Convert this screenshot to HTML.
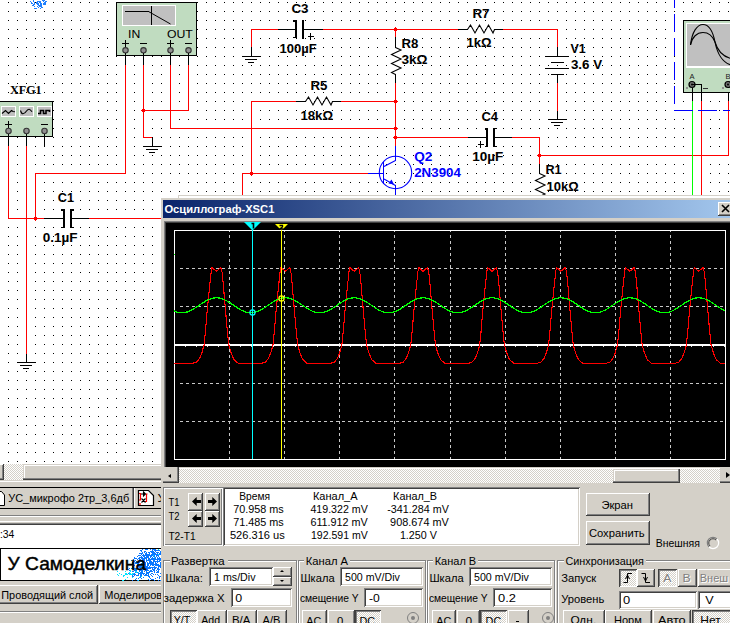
<!DOCTYPE html><html><head><meta charset="utf-8"><style>
*{margin:0;padding:0;box-sizing:border-box}
html,body{width:730px;height:623px;overflow:hidden;background:#fff}
body{position:relative;font-family:"Liberation Sans",sans-serif}
.a{position:absolute}
</style></head><body>
<svg class="a" style="left:0;top:0" width="730" height="623" viewBox="0 0 730 623" shape-rendering="crispEdges">
<defs><pattern id="gd" x="0" y="0" width="9" height="9" patternUnits="userSpaceOnUse"><rect x="8" y="2" width="1" height="1" fill="#000"/></pattern></defs>
<rect x="0" y="0" width="730" height="464" fill="#fff"/>
<rect x="0" y="0" width="730" height="464" fill="url(#gd)"/>
<g fill="#1e7fff">
<rect x="33" y="0" width="1" height="1"/>
<rect x="42" y="0" width="1" height="1"/>
<rect x="43" y="0" width="1" height="1"/>
<rect x="44" y="0" width="1" height="1"/>
<rect x="30" y="1" width="1" height="1"/>
<rect x="33" y="1" width="1" height="1"/>
<rect x="37" y="1" width="1" height="1"/>
<rect x="38" y="1" width="1" height="1"/>
<rect x="39" y="1" width="1" height="1"/>
<rect x="40" y="1" width="1" height="1"/>
<rect x="43" y="1" width="1" height="1"/>
<rect x="45" y="1" width="1" height="1"/>
<rect x="46" y="1" width="1" height="1"/>
<rect x="31" y="2" width="1" height="1"/>
<rect x="34" y="2" width="1" height="1"/>
<rect x="36" y="2" width="1" height="1"/>
<rect x="37" y="2" width="1" height="1"/>
<rect x="39" y="2" width="1" height="1"/>
<rect x="40" y="2" width="1" height="1"/>
<rect x="44" y="2" width="1" height="1"/>
<rect x="45" y="2" width="1" height="1"/>
<rect x="31" y="3" width="1" height="1"/>
<rect x="32" y="3" width="1" height="1"/>
<rect x="34" y="3" width="1" height="1"/>
<rect x="36" y="3" width="1" height="1"/>
<rect x="37" y="3" width="1" height="1"/>
<rect x="38" y="3" width="1" height="1"/>
<rect x="40" y="3" width="1" height="1"/>
<rect x="41" y="3" width="1" height="1"/>
<rect x="43" y="3" width="1" height="1"/>
<rect x="44" y="3" width="1" height="1"/>
<rect x="45" y="3" width="1" height="1"/>
<rect x="33" y="4" width="1" height="1"/>
<rect x="34" y="4" width="1" height="1"/>
<rect x="37" y="4" width="1" height="1"/>
<rect x="38" y="4" width="1" height="1"/>
<rect x="40" y="4" width="1" height="1"/>
<rect x="41" y="4" width="1" height="1"/>
<rect x="43" y="4" width="1" height="1"/>
<rect x="44" y="4" width="1" height="1"/>
<rect x="45" y="4" width="1" height="1"/>
<rect x="32" y="5" width="1" height="1"/>
<rect x="33" y="5" width="1" height="1"/>
<rect x="38" y="5" width="1" height="1"/>
<rect x="39" y="5" width="1" height="1"/>
<rect x="40" y="5" width="1" height="1"/>
<rect x="41" y="5" width="1" height="1"/>
<rect x="34" y="6" width="1" height="1"/>
<rect x="37" y="6" width="1" height="1"/>
<rect x="39" y="6" width="1" height="1"/>
<rect x="40" y="6" width="1" height="1"/>
<rect x="41" y="6" width="1" height="1"/>
<rect x="38" y="7" width="1" height="1"/>
<rect x="41" y="7" width="1" height="1"/>
<rect x="42" y="7" width="1" height="1"/>
<rect x="34" y="8" width="1" height="1"/>
<rect x="35" y="8" width="1" height="1"/>
<rect x="36" y="8" width="1" height="1"/>
<rect x="40" y="8" width="1" height="1"/>
</g>
<rect x="116.5" y="2.5" width="80" height="53" fill="#c0dcc0" stroke="#000" shape-rendering="auto"/>
<rect x="122" y="5" width="54" height="21" fill="#fff"/>
<rect x="123" y="6" width="52" height="19" fill="#c0c0c0"/>
<rect x="125" y="11" width="24" height="1" fill="#000000"/>
<rect x="151" y="6" width="1" height="19" fill="#000000"/>
<path d="M148.5,11.5 L170.5,24" stroke="#000" fill="none" shape-rendering="auto"/>
<text x="128.0" y="38" font-family="Liberation Sans" font-size="11.5" font-weight="normal" fill="#000000" textLength="12.2" lengthAdjust="spacingAndGlyphs">IN</text>
<text x="166.9" y="38" font-family="Liberation Sans" font-size="11.5" font-weight="normal" fill="#000000" textLength="25.9" lengthAdjust="spacingAndGlyphs">OUT</text>
<rect x="122" y="43" width="7" height="1" fill="#000000"/>
<rect x="125" y="40" width="1" height="7" fill="#000000"/>
<rect x="167" y="43" width="7" height="1" fill="#000000"/>
<rect x="170" y="40" width="1" height="7" fill="#000000"/>
<rect x="140" y="43" width="7" height="1" fill="#000000"/>
<rect x="185" y="43" width="7" height="1" fill="#000000"/>
<circle cx="125.5" cy="50.3" r="2.7" fill="#909090" stroke="#333" stroke-width="1.1" shape-rendering="auto"/>
<rect x="125" y="53" width="1" height="12" fill="#000000"/>
<circle cx="143.5" cy="50.3" r="2.7" fill="#909090" stroke="#333" stroke-width="1.1" shape-rendering="auto"/>
<rect x="143" y="53" width="1" height="12" fill="#000000"/>
<circle cx="170.5" cy="50.3" r="2.7" fill="#909090" stroke="#333" stroke-width="1.1" shape-rendering="auto"/>
<rect x="170" y="53" width="1" height="12" fill="#000000"/>
<circle cx="188.5" cy="50.3" r="2.7" fill="#909090" stroke="#333" stroke-width="1.1" shape-rendering="auto"/>
<rect x="188" y="53" width="1" height="12" fill="#000000"/>
<text x="10.0" y="94" font-family="Liberation Serif" font-size="12.2" font-weight="bold" fill="#000000" textLength="31.6" lengthAdjust="spacingAndGlyphs">XFG1</text>
<rect x="-1.5" y="101.5" width="54" height="35" fill="#c0dcc0" stroke="#000" shape-rendering="auto"/>
<rect x="1" y="106" width="15" height="11" fill="#fff"/><rect x="2" y="107" width="13" height="9" fill="#c0c0c0"/>
<rect x="19" y="106" width="15" height="11" fill="#fff"/><rect x="20" y="107" width="13" height="9" fill="#c0c0c0"/>
<rect x="37" y="106" width="15" height="11" fill="#fff"/><rect x="38" y="107" width="13" height="9" fill="#c0c0c0"/>
<path d="M2,113.5 L5.5,110.5 L8.5,113.5 L11.5,110.5 L13,111.5 L15,111.8" fill="none" stroke="#000" stroke-width="1.1" shape-rendering="auto"/>
<path d="M20.5,110.5 Q21.5,114 23,113.7 Q25,113.5 26.5,111 Q28,109 29.2,109.2 Q30.5,109.5 32,111.8" fill="none" stroke="#000" stroke-width="1.1" shape-rendering="auto"/>
<path d="M38,113.5 H40.5 V110.5 H43.5 V113.5 H46 V110.5 H49.5 V112" fill="none" stroke="#000" stroke-width="1.6" shape-rendering="auto"/>
<rect x="5" y="124" width="7" height="1" fill="#000000"/>
<rect x="8" y="121" width="1" height="7" fill="#000000"/>
<rect x="41" y="124" width="7" height="1" fill="#000000"/>
<circle cx="8.5" cy="131" r="2.7" fill="#909090" stroke="#333" stroke-width="1.1" shape-rendering="auto"/>
<rect x="8" y="134" width="1" height="13" fill="#000000"/>
<circle cx="26.5" cy="131" r="2.7" fill="#909090" stroke="#333" stroke-width="1.1" shape-rendering="auto"/>
<rect x="26" y="134" width="1" height="13" fill="#000000"/>
<circle cx="44.5" cy="131" r="2.7" fill="#909090" stroke="#333" stroke-width="1.1" shape-rendering="auto"/>
<rect x="44" y="134" width="1" height="13" fill="#000000"/>
<rect x="8" y="146" width="1" height="73" fill="#ff0000"/>
<rect x="8" y="218" width="37" height="1" fill="#ff0000"/>
<rect x="26" y="146" width="1" height="209" fill="#ff0000"/>
<rect x="26" y="354" width="1" height="8" fill="#000000"/>
<rect x="17" y="362" width="19" height="1" fill="#000000"/>
<rect x="20" y="365" width="12" height="1" fill="#000000"/>
<rect x="23" y="368" width="6" height="1" fill="#000000"/>
<rect x="35" y="173" width="1" height="46" fill="#ff0000"/>
<rect x="34" y="217" width="3" height="3" fill="#ff0000"/><rect x="33" y="218" width="5" height="1" fill="#ff0000"/><rect x="35" y="216" width="1" height="5" fill="#ff0000"/>
<rect x="35" y="173" width="91" height="1" fill="#ff0000"/>
<rect x="125" y="65" width="1" height="109" fill="#ff0000"/>
<rect x="44" y="218" width="20" height="1" fill="#000000"/>
<rect x="63" y="209" width="2" height="19" fill="#000"/><rect x="61" y="209" width="3" height="1.5" fill="#000"/><rect x="61" y="226.5" width="3" height="1.5" fill="#000"/>
<rect x="70" y="209" width="2" height="19" fill="#000"/><rect x="71" y="209" width="3" height="1.5" fill="#000"/><rect x="71" y="226.5" width="3" height="1.5" fill="#000"/>
<rect x="71" y="218" width="19" height="1" fill="#000000"/>
<rect x="89" y="218" width="77" height="1" fill="#ff0000"/>
<text x="57.8" y="202" font-family="Liberation Sans" font-size="12" font-weight="bold" fill="#000000" textLength="16.2" lengthAdjust="spacingAndGlyphs">C1</text>
<text x="42.7" y="242" font-family="Liberation Sans" font-size="12" font-weight="bold" fill="#000000" textLength="34.9" lengthAdjust="spacingAndGlyphs">0.1µF</text>
<rect x="143" y="65" width="1" height="73" fill="#ff0000"/>
<rect x="143" y="137" width="10" height="1" fill="#ff0000"/>
<rect x="152" y="137" width="1" height="10" fill="#000000"/>
<rect x="143" y="146" width="19" height="1" fill="#000000"/>
<rect x="146" y="149" width="12" height="1" fill="#000000"/>
<rect x="149" y="152" width="6" height="1" fill="#000000"/>
<rect x="142" y="109" width="3" height="3" fill="#ff0000"/><rect x="141" y="110" width="5" height="1" fill="#ff0000"/><rect x="143" y="108" width="1" height="5" fill="#ff0000"/>
<rect x="143" y="110" width="46" height="1" fill="#ff0000"/>
<rect x="188" y="65" width="1" height="46" fill="#ff0000"/>
<rect x="170" y="65" width="1" height="64" fill="#ff0000"/>
<rect x="170" y="128" width="226" height="1" fill="#ff0000"/>
<rect x="251" y="29" width="1" height="19" fill="#ff0000"/>
<rect x="251" y="47" width="1" height="10" fill="#000000"/>
<rect x="242" y="56" width="19" height="1" fill="#000000"/>
<rect x="245" y="59" width="12" height="1" fill="#000000"/>
<rect x="248" y="62" width="6" height="1" fill="#000000"/>
<rect x="251" y="29" width="28" height="1" fill="#ff0000"/>
<rect x="278" y="29" width="17" height="1" fill="#000000"/>
<rect x="295" y="20" width="2" height="18" fill="#000"/><rect x="293" y="20" width="3" height="1.5" fill="#000"/><rect x="293" y="36.5" width="3" height="1.5" fill="#000"/>
<rect x="302" y="20" width="2" height="19" fill="#000"/>
<rect x="303" y="29" width="21" height="1" fill="#000000"/>
<rect x="323" y="29" width="136" height="1" fill="#ff0000"/>
<rect x="394" y="28" width="3" height="3" fill="#ff0000"/><rect x="393" y="29" width="5" height="1" fill="#ff0000"/><rect x="395" y="27" width="1" height="5" fill="#ff0000"/>
<text x="291.4" y="13" font-family="Liberation Sans" font-size="12" font-weight="bold" fill="#000000" textLength="17.2" lengthAdjust="spacingAndGlyphs">C3</text>
<text x="279.4" y="53" font-family="Liberation Sans" font-size="12" font-weight="bold" fill="#000000" textLength="37.2" lengthAdjust="spacingAndGlyphs">100µF</text>
<rect x="308" y="36" width="6" height="1" fill="#000000"/>
<rect x="310" y="33" width="1" height="7" fill="#000000"/>
<rect x="458" y="29" width="10" height="1" fill="#000000"/>
<path d="M467.5,29.5 L470.5,25.0 L475.0,33.0 L479.5,25.0 L484.0,33.0 L488.5,25.0 L493.0,33.0 L494.5,29.5" fill="none" stroke="#000" stroke-width="1.1" shape-rendering="auto"/>
<rect x="494" y="29" width="10" height="1" fill="#000000"/>
<rect x="503" y="29" width="55" height="1" fill="#ff0000"/>
<rect x="557" y="29" width="1" height="19" fill="#ff0000"/>
<rect x="557" y="47" width="1" height="10" fill="#000000"/>
<text x="472.4" y="18" font-family="Liberation Sans" font-size="12" font-weight="bold" fill="#000000" textLength="17.2" lengthAdjust="spacingAndGlyphs">R7</text>
<text x="466.4" y="47" font-family="Liberation Sans" font-size="12" font-weight="bold" fill="#000000" textLength="25.2" lengthAdjust="spacingAndGlyphs">1kΩ</text>
<rect x="545" y="56" width="24" height="1" fill="#000000"/>
<rect x="551" y="62" width="13" height="1" fill="#000000"/>
<rect x="545" y="68" width="24" height="1" fill="#000000"/>
<rect x="551" y="74" width="13" height="1" fill="#000000"/>
<rect x="557" y="74" width="1" height="10" fill="#000000"/>
<rect x="557" y="83" width="1" height="29" fill="#ff0000"/>
<rect x="557" y="111" width="1" height="9" fill="#000000"/>
<rect x="548" y="119" width="19" height="1" fill="#000000"/>
<rect x="551" y="122" width="12" height="1" fill="#000000"/>
<rect x="554" y="125" width="6" height="1" fill="#000000"/>
<text x="570.4" y="53" font-family="Liberation Sans" font-size="12" font-weight="bold" fill="#000000" textLength="15.2" lengthAdjust="spacingAndGlyphs">V1</text>
<text x="570.9" y="69" font-family="Liberation Sans" font-size="12" font-weight="bold" fill="#000000" textLength="31.2" lengthAdjust="spacingAndGlyphs">3.6 V</text>
<rect x="395" y="29" width="1" height="9" fill="#ff0000"/>
<rect x="395" y="37" width="1" height="11" fill="#000000"/>
<path d="M395.5,47.5 L401.0,50.0 L391.5,54.5 L401.0,59.0 L391.5,63.5 L401.0,68.0 L391.5,72.5 L395.5,74.5" fill="none" stroke="#000" stroke-width="1.1" shape-rendering="auto"/>
<rect x="395" y="74" width="1" height="10" fill="#000000"/>
<rect x="395" y="83" width="1" height="64" fill="#ff0000"/>
<text x="401.4" y="48" font-family="Liberation Sans" font-size="12" font-weight="bold" fill="#000000" textLength="16.9" lengthAdjust="spacingAndGlyphs">R8</text>
<text x="401.4" y="64" font-family="Liberation Sans" font-size="12" font-weight="bold" fill="#000000" textLength="26.2" lengthAdjust="spacingAndGlyphs">3kΩ</text>
<rect x="394" y="100" width="3" height="3" fill="#ff0000"/><rect x="393" y="101" width="5" height="1" fill="#ff0000"/><rect x="395" y="99" width="1" height="5" fill="#ff0000"/>
<rect x="394" y="127" width="3" height="3" fill="#ff0000"/><rect x="393" y="128" width="5" height="1" fill="#ff0000"/><rect x="395" y="126" width="1" height="5" fill="#ff0000"/>
<rect x="394" y="136" width="3" height="3" fill="#ff0000"/><rect x="393" y="137" width="5" height="1" fill="#ff0000"/><rect x="395" y="135" width="1" height="5" fill="#ff0000"/>
<rect x="251" y="101" width="46" height="1" fill="#ff0000"/>
<rect x="296" y="101" width="10" height="1" fill="#000000"/>
<path d="M305.5,101.5 L308.5,97.0 L313.0,105.0 L317.5,97.0 L322.0,105.0 L326.5,97.0 L331.0,105.0 L332.5,101.5" fill="none" stroke="#000" stroke-width="1.1" shape-rendering="auto"/>
<rect x="332" y="101" width="10" height="1" fill="#000000"/>
<rect x="341" y="101" width="55" height="1" fill="#ff0000"/>
<rect x="251" y="101" width="1" height="73" fill="#ff0000"/>
<rect x="250" y="172" width="3" height="3" fill="#ff0000"/><rect x="249" y="173" width="5" height="1" fill="#ff0000"/><rect x="251" y="171" width="1" height="5" fill="#ff0000"/>
<text x="310.4" y="90" font-family="Liberation Sans" font-size="12" font-weight="bold" fill="#000000" textLength="17.0" lengthAdjust="spacingAndGlyphs">R5</text>
<text x="300.4" y="119.5" font-family="Liberation Sans" font-size="12" font-weight="bold" fill="#000000" textLength="32.7" lengthAdjust="spacingAndGlyphs">18kΩ</text>
<rect x="242" y="173" width="10" height="1" fill="#ff0000"/>
<rect x="242" y="173" width="1" height="25" fill="#ff0000"/>
<rect x="251" y="173" width="118" height="1" fill="#ff0000"/>
<circle cx="395.5" cy="172.5" r="16.2" fill="none" stroke="#0000ff" stroke-width="1.1" shape-rendering="auto"/>
<rect x="368" y="173" width="16" height="1" fill="#0000ff"/>
<rect x="383" y="162" width="1" height="22" fill="#0000ff"/>
<path d="M384,166.5 L395.5,160.5 M384,179 L395.5,185.5" stroke="#0000ff" stroke-width="1.1" fill="none" shape-rendering="auto"/>
<path d="M394,184.5 L388.5,183.5 L391.5,179.5 Z" fill="#0000ff" shape-rendering="auto"/>
<rect x="395" y="146" width="1" height="15" fill="#0000ff"/>
<rect x="395" y="185" width="1" height="13" fill="#0000ff"/>
<text x="414.2" y="161" font-family="Liberation Sans" font-size="12.5" font-weight="bold" fill="#0000ff" textLength="18.1" lengthAdjust="spacingAndGlyphs">Q2</text>
<text x="414.2" y="177" font-family="Liberation Sans" font-size="12.5" font-weight="bold" fill="#0000ff" textLength="46.7" lengthAdjust="spacingAndGlyphs">2N3904</text>
<rect x="395" y="137" width="74" height="1" fill="#ff0000"/>
<rect x="468" y="137" width="19" height="1" fill="#000000"/>
<rect x="486" y="128" width="2" height="19" fill="#000"/><rect x="485" y="128" width="2" height="1.5" fill="#000"/><rect x="485" y="145.5" width="2" height="1.5" fill="#000"/>
<rect x="493" y="128" width="2" height="19" fill="#000"/><rect x="494" y="127.5" width="3" height="1.5" fill="#000"/><rect x="494" y="145.5" width="3" height="1.5" fill="#000"/>
<rect x="494" y="137" width="19" height="1" fill="#000000"/>
<rect x="512" y="137" width="28" height="1" fill="#ff0000"/>
<rect x="539" y="137" width="1" height="19" fill="#ff0000"/>
<rect x="538" y="154" width="3" height="3" fill="#ff0000"/><rect x="537" y="155" width="5" height="1" fill="#ff0000"/><rect x="539" y="153" width="1" height="5" fill="#ff0000"/>
<text x="481.4" y="121" font-family="Liberation Sans" font-size="12" font-weight="bold" fill="#000000" textLength="16.7" lengthAdjust="spacingAndGlyphs">C4</text>
<text x="472.2" y="161" font-family="Liberation Sans" font-size="12" font-weight="bold" fill="#000000" textLength="31.1" lengthAdjust="spacingAndGlyphs">10µF</text>
<rect x="478" y="144" width="6" height="1" fill="#000000"/>
<rect x="480" y="141" width="1" height="7" fill="#000000"/>
<rect x="539" y="155" width="190" height="1" fill="#ff0000"/>
<rect x="728" y="101" width="1" height="55" fill="#ff0000"/>
<rect x="728" y="88" width="1" height="13" fill="#000000"/>
<rect x="539" y="155" width="1" height="10" fill="#ff0000"/>
<rect x="539" y="164" width="1" height="10" fill="#000000"/>
<path d="M539.5,173.5 L545.0,176.0 L535.5,180.5 L545.0,185.0 L535.5,189.5 L545.0,194.0 L535.5,198.5 L539.5,200.5" fill="none" stroke="#000" stroke-width="1.1" shape-rendering="auto"/>
<text x="545.4" y="174" font-family="Liberation Sans" font-size="12" font-weight="bold" fill="#000000" textLength="16.2" lengthAdjust="spacingAndGlyphs">R1</text>
<text x="546.4" y="190.5" font-family="Liberation Sans" font-size="12" font-weight="bold" fill="#000000" textLength="32.2" lengthAdjust="spacingAndGlyphs">10kΩ</text>
<rect x="683.5" y="20.5" width="60" height="72" fill="#c0dcc0" stroke="#000" shape-rendering="auto"/>
<rect x="686" y="23" width="50" height="45" fill="#fff"/><rect x="687" y="24" width="50" height="42" fill="#c0c0c0"/>
<path d="M690.5,45 C692,32 697,24.5 703,24.5 C709,24.5 713,32 715,42 C717,52 721,62 731,65" fill="none" stroke="#000" stroke-width="1.1" shape-rendering="auto"/>
<path d="M690.5,45 C692,37 697,32.5 703,32.5 C709,32.5 713,37 715,42 C717,49 721,56 731,58.5" fill="none" stroke="#000" stroke-width="1.1" shape-rendering="auto"/>
<text x="692" y="79" font-family="Liberation Sans" font-size="7.5" font-weight="normal" fill="#202020" text-anchor="middle" >A</text>
<text x="728" y="79" font-family="Liberation Sans" font-size="7.5" font-weight="normal" fill="#202020" text-anchor="middle" >B</text>
<rect x="703" y="88" width="5" height="1" fill="#303030"/>
<rect x="686" y="87" width="2" height="2" fill="#909090"/><rect x="722" y="87" width="2" height="2" fill="#909090"/>
<circle cx="692" cy="84.5" r="3" fill="#707070" stroke="#000" stroke-width="1.2" shape-rendering="auto"/>
<circle cx="692" cy="84.5" r="1" fill="#000" shape-rendering="auto"/>
<circle cx="728" cy="84.5" r="3" fill="#707070" stroke="#000" stroke-width="1.2" shape-rendering="auto"/>
<circle cx="728" cy="84.5" r="1" fill="#000" shape-rendering="auto"/>
<rect x="692" y="84" width="10" height="1" fill="#000000"/>
<rect x="701" y="84" width="1" height="9" fill="#000000"/>
<rect x="692" y="88" width="1" height="13" fill="#000000"/>
<rect x="692" y="101" width="1" height="97" fill="#00ff00"/>
<rect x="701" y="92" width="1" height="9" fill="#000000"/>
<rect x="701" y="101" width="1" height="97" fill="#ff0000"/>
<rect x="674" y="0" width="1" height="8" fill="#0000ff"/>
<rect x="674" y="14" width="1" height="18" fill="#0000ff"/>
<rect x="674" y="38" width="1" height="18" fill="#0000ff"/>
<rect x="674" y="62" width="1" height="18" fill="#0000ff"/>
<rect x="674" y="86" width="1" height="18" fill="#0000ff"/>
<rect x="674" y="110" width="19" height="1" fill="#0000ff"/>
<rect x="698" y="110" width="19" height="1" fill="#0000ff"/>
<rect x="723" y="110" width="8" height="1" fill="#0000ff"/>
</svg><div class="a" style="left:0px;top:464px;width:161px;height:159px;background:#d4d0c8"></div>
<div class="a" style="left:0px;top:464px;width:161px;height:16px;background-image:repeating-conic-gradient(#fff 0 25%, #d4d0c8 0 50%);background-size:2px 2px"></div>
<div class="a" style="left:-12px;top:464px;width:16px;height:16px;box-shadow:inset -1px -1px #404040, inset 1px 1px #fff, inset -2px -2px #808080;background:#d4d0c8"></div>
<div class="a" style="left:23px;top:464px;width:150px;height:16px;box-shadow:inset -1px -1px #404040, inset -2px -2px #808080, inset 1px 1px #d4d0c8, inset 2px 2px #fff;background:#d4d0c8"></div>
<div class="a" style="left:0px;top:481px;width:161px;height:1px;background:#fff"></div>
<div class="a" style="left:0px;top:487px;width:161px;height:1px;background:#000"></div>
<div class="a" style="left:0px;top:508px;width:161px;height:1px;background:#000"></div>
<div class="a" style="left:-30px;top:488px;width:164px;height:20px;box-shadow:inset -1px 0 #404040, inset -2px 0 #808080, inset 1px 0 #fff"></div>
<svg class="a" style="left:0;top:491px" width="6" height="16"><path d="M-6,0.5 H1.5 L4.5,4 V14.5 H-6" fill="#fff" stroke="#000"/></svg>
<div class="a" style="left:134px;top:488px;width:40px;height:20px;box-shadow:inset 1px 0 #fff"></div>
<svg class="a" style="left:137px;top:489px" width="18" height="18"><path d="M1.5,1.5 H11.5 L16.5,6.5 V16.5 H1.5 Z" fill="#fff" stroke="#000" stroke-width="1.2"/><path d="M2,4.5 H3.5 V11 H2 M10.5,5 H9.5 V12.5 H8 M3,14 V16" fill="none" stroke="#ff0000" stroke-width="1.2"/><path d="M4,5 h4 M6.5,3 l2,2 l-2,2 z M4.5,9.5 l4,4 M8.5,9.5 l-4,4" stroke="#000" fill="none" stroke-width="1.1"/></svg>
<div class="a" style="left:0px;top:515px;width:161px;height:1px;background:#808080"></div>
<div class="a" style="left:0px;top:516px;width:161px;height:1px;background:#fff"></div>
<div class="a" style="left:0px;top:521px;width:161px;height:1px;background:#fff"></div>
<div class="a" style="left:0px;top:523px;width:161px;height:1px;background:#808080"></div>
<div class="a" style="left:0px;top:524px;width:161px;height:1px;background:#404040"></div>
<div class="a" style="left:0px;top:525px;width:161px;height:23px;background:#fff"></div>
<div class="a" style="left:0px;top:548px;width:161px;height:33px;background:#fff;border:1px solid #000;border-right:none"></div>
<svg class="a" style="left:0;top:0" width="165" height="623" shape-rendering="crispEdges"><rect x="142" y="549" width="1" height="1" fill="#0a78ff"/><rect x="145" y="549" width="1" height="1" fill="#0a78ff"/><rect x="146" y="549" width="1" height="1" fill="#0a78ff"/><rect x="147" y="549" width="1" height="1" fill="#0a78ff"/><rect x="150" y="549" width="1" height="1" fill="#0a78ff"/><rect x="152" y="549" width="1" height="1" fill="#0a78ff"/><rect x="153" y="549" width="1" height="1" fill="#0a78ff"/><rect x="154" y="549" width="1" height="1" fill="#0a78ff"/><rect x="155" y="549" width="1" height="1" fill="#0a78ff"/><rect x="158" y="549" width="1" height="1" fill="#00e4ff"/><rect x="161" y="549" width="1" height="1" fill="#0a78ff"/><rect x="162" y="549" width="1" height="1" fill="#0a78ff"/><rect x="140" y="550" width="1" height="1" fill="#0a78ff"/><rect x="141" y="550" width="1" height="1" fill="#0a78ff"/><rect x="152" y="550" width="1" height="1" fill="#0a78ff"/><rect x="154" y="550" width="1" height="1" fill="#0a78ff"/><rect x="155" y="550" width="1" height="1" fill="#0a78ff"/><rect x="156" y="550" width="1" height="1" fill="#0a78ff"/><rect x="157" y="550" width="1" height="1" fill="#0a78ff"/><rect x="158" y="550" width="1" height="1" fill="#0a78ff"/><rect x="159" y="550" width="1" height="1" fill="#0a78ff"/><rect x="161" y="550" width="1" height="1" fill="#0a78ff"/><rect x="141" y="551" width="1" height="1" fill="#0a78ff"/><rect x="144" y="551" width="1" height="1" fill="#0a78ff"/><rect x="145" y="551" width="1" height="1" fill="#0a78ff"/><rect x="150" y="551" width="1" height="1" fill="#0a78ff"/><rect x="151" y="551" width="1" height="1" fill="#0a78ff"/><rect x="152" y="551" width="1" height="1" fill="#0a78ff"/><rect x="153" y="551" width="1" height="1" fill="#0a78ff"/><rect x="155" y="551" width="1" height="1" fill="#0a78ff"/><rect x="160" y="551" width="1" height="1" fill="#0a78ff"/><rect x="142" y="552" width="1" height="1" fill="#0a78ff"/><rect x="144" y="552" width="1" height="1" fill="#0a78ff"/><rect x="146" y="552" width="1" height="1" fill="#0a78ff"/><rect x="148" y="552" width="1" height="1" fill="#0a78ff"/><rect x="149" y="552" width="1" height="1" fill="#0a78ff"/><rect x="151" y="552" width="1" height="1" fill="#0a78ff"/><rect x="152" y="552" width="1" height="1" fill="#0a78ff"/><rect x="153" y="552" width="1" height="1" fill="#0a78ff"/><rect x="154" y="552" width="1" height="1" fill="#0a78ff"/><rect x="156" y="552" width="1" height="1" fill="#0a78ff"/><rect x="157" y="552" width="1" height="1" fill="#0a78ff"/><rect x="158" y="552" width="1" height="1" fill="#0a78ff"/><rect x="160" y="552" width="1" height="1" fill="#0a78ff"/><rect x="161" y="552" width="1" height="1" fill="#0a78ff"/><rect x="162" y="552" width="1" height="1" fill="#0a78ff"/><rect x="139" y="553" width="1" height="1" fill="#0a78ff"/><rect x="140" y="553" width="1" height="1" fill="#0a78ff"/><rect x="141" y="553" width="1" height="1" fill="#0a78ff"/><rect x="142" y="553" width="1" height="1" fill="#0a78ff"/><rect x="145" y="553" width="1" height="1" fill="#0a78ff"/><rect x="146" y="553" width="1" height="1" fill="#0a78ff"/><rect x="149" y="553" width="1" height="1" fill="#0a78ff"/><rect x="152" y="553" width="1" height="1" fill="#0a78ff"/><rect x="153" y="553" width="1" height="1" fill="#0a78ff"/><rect x="154" y="553" width="1" height="1" fill="#0a78ff"/><rect x="155" y="553" width="1" height="1" fill="#0a78ff"/><rect x="157" y="553" width="1" height="1" fill="#0a78ff"/><rect x="159" y="553" width="1" height="1" fill="#0a78ff"/><rect x="160" y="553" width="1" height="1" fill="#0a78ff"/><rect x="161" y="553" width="1" height="1" fill="#0a78ff"/><rect x="141" y="554" width="1" height="1" fill="#0a78ff"/><rect x="143" y="554" width="1" height="1" fill="#0a78ff"/><rect x="145" y="554" width="1" height="1" fill="#0a78ff"/><rect x="146" y="554" width="1" height="1" fill="#0a78ff"/><rect x="147" y="554" width="1" height="1" fill="#0a78ff"/><rect x="148" y="554" width="1" height="1" fill="#0a78ff"/><rect x="149" y="554" width="1" height="1" fill="#0a78ff"/><rect x="151" y="554" width="1" height="1" fill="#0a78ff"/><rect x="152" y="554" width="1" height="1" fill="#0a78ff"/><rect x="153" y="554" width="1" height="1" fill="#0a78ff"/><rect x="154" y="554" width="1" height="1" fill="#0a78ff"/><rect x="155" y="554" width="1" height="1" fill="#0a78ff"/><rect x="156" y="554" width="1" height="1" fill="#0a78ff"/><rect x="157" y="554" width="1" height="1" fill="#0a78ff"/><rect x="158" y="554" width="1" height="1" fill="#00e4ff"/><rect x="159" y="554" width="1" height="1" fill="#0a78ff"/><rect x="160" y="554" width="1" height="1" fill="#0a78ff"/><rect x="161" y="554" width="1" height="1" fill="#0a78ff"/><rect x="138" y="555" width="1" height="1" fill="#0a78ff"/><rect x="139" y="555" width="1" height="1" fill="#0a78ff"/><rect x="140" y="555" width="1" height="1" fill="#0a78ff"/><rect x="142" y="555" width="1" height="1" fill="#0a78ff"/><rect x="143" y="555" width="1" height="1" fill="#0a78ff"/><rect x="144" y="555" width="1" height="1" fill="#0a78ff"/><rect x="145" y="555" width="1" height="1" fill="#0a78ff"/><rect x="146" y="555" width="1" height="1" fill="#0a78ff"/><rect x="147" y="555" width="1" height="1" fill="#0a78ff"/><rect x="148" y="555" width="1" height="1" fill="#0a78ff"/><rect x="149" y="555" width="1" height="1" fill="#0a78ff"/><rect x="150" y="555" width="1" height="1" fill="#0a78ff"/><rect x="151" y="555" width="1" height="1" fill="#0a78ff"/><rect x="152" y="555" width="1" height="1" fill="#0a78ff"/><rect x="153" y="555" width="1" height="1" fill="#00e4ff"/><rect x="154" y="555" width="1" height="1" fill="#0a78ff"/><rect x="156" y="555" width="1" height="1" fill="#0a78ff"/><rect x="157" y="555" width="1" height="1" fill="#0a78ff"/><rect x="158" y="555" width="1" height="1" fill="#0a78ff"/><rect x="162" y="555" width="1" height="1" fill="#0a78ff"/><rect x="137" y="556" width="1" height="1" fill="#0a78ff"/><rect x="141" y="556" width="1" height="1" fill="#0a78ff"/><rect x="143" y="556" width="1" height="1" fill="#0a78ff"/><rect x="144" y="556" width="1" height="1" fill="#0a78ff"/><rect x="146" y="556" width="1" height="1" fill="#0a78ff"/><rect x="147" y="556" width="1" height="1" fill="#0a78ff"/><rect x="148" y="556" width="1" height="1" fill="#0a78ff"/><rect x="150" y="556" width="1" height="1" fill="#0a78ff"/><rect x="151" y="556" width="1" height="1" fill="#0a78ff"/><rect x="153" y="556" width="1" height="1" fill="#0a78ff"/><rect x="154" y="556" width="1" height="1" fill="#0a78ff"/><rect x="156" y="556" width="1" height="1" fill="#0a78ff"/><rect x="158" y="556" width="1" height="1" fill="#0a78ff"/><rect x="134" y="557" width="1" height="1" fill="#0a78ff"/><rect x="139" y="557" width="1" height="1" fill="#0a78ff"/><rect x="140" y="557" width="1" height="1" fill="#0a78ff"/><rect x="141" y="557" width="1" height="1" fill="#0a78ff"/><rect x="142" y="557" width="1" height="1" fill="#0a78ff"/><rect x="144" y="557" width="1" height="1" fill="#0a78ff"/><rect x="145" y="557" width="1" height="1" fill="#0a78ff"/><rect x="146" y="557" width="1" height="1" fill="#0a78ff"/><rect x="147" y="557" width="1" height="1" fill="#0a78ff"/><rect x="148" y="557" width="1" height="1" fill="#0a78ff"/><rect x="150" y="557" width="1" height="1" fill="#0a78ff"/><rect x="152" y="557" width="1" height="1" fill="#0a78ff"/><rect x="154" y="557" width="1" height="1" fill="#00e4ff"/><rect x="155" y="557" width="1" height="1" fill="#0a78ff"/><rect x="157" y="557" width="1" height="1" fill="#0a78ff"/><rect x="159" y="557" width="1" height="1" fill="#0a78ff"/><rect x="161" y="557" width="1" height="1" fill="#0a78ff"/><rect x="134" y="558" width="1" height="1" fill="#0a78ff"/><rect x="135" y="558" width="1" height="1" fill="#0a78ff"/><rect x="136" y="558" width="1" height="1" fill="#0a78ff"/><rect x="138" y="558" width="1" height="1" fill="#0a78ff"/><rect x="139" y="558" width="1" height="1" fill="#0a78ff"/><rect x="141" y="558" width="1" height="1" fill="#0a78ff"/><rect x="142" y="558" width="1" height="1" fill="#0a78ff"/><rect x="143" y="558" width="1" height="1" fill="#0a78ff"/><rect x="144" y="558" width="1" height="1" fill="#0a78ff"/><rect x="145" y="558" width="1" height="1" fill="#0a78ff"/><rect x="146" y="558" width="1" height="1" fill="#0a78ff"/><rect x="148" y="558" width="1" height="1" fill="#0a78ff"/><rect x="149" y="558" width="1" height="1" fill="#0a78ff"/><rect x="151" y="558" width="1" height="1" fill="#0a78ff"/><rect x="152" y="558" width="1" height="1" fill="#0a78ff"/><rect x="153" y="558" width="1" height="1" fill="#0a78ff"/><rect x="154" y="558" width="1" height="1" fill="#0a78ff"/><rect x="155" y="558" width="1" height="1" fill="#0a78ff"/><rect x="157" y="558" width="1" height="1" fill="#0a78ff"/><rect x="158" y="558" width="1" height="1" fill="#0a78ff"/><rect x="159" y="558" width="1" height="1" fill="#0a78ff"/><rect x="160" y="558" width="1" height="1" fill="#0a78ff"/><rect x="161" y="558" width="1" height="1" fill="#0a78ff"/><rect x="162" y="558" width="1" height="1" fill="#0a78ff"/><rect x="133" y="559" width="1" height="1" fill="#0a78ff"/><rect x="137" y="559" width="1" height="1" fill="#0a78ff"/><rect x="139" y="559" width="1" height="1" fill="#0a78ff"/><rect x="140" y="559" width="1" height="1" fill="#0a78ff"/><rect x="142" y="559" width="1" height="1" fill="#0a78ff"/><rect x="143" y="559" width="1" height="1" fill="#0a78ff"/><rect x="144" y="559" width="1" height="1" fill="#0a78ff"/><rect x="146" y="559" width="1" height="1" fill="#0a78ff"/><rect x="148" y="559" width="1" height="1" fill="#0a78ff"/><rect x="149" y="559" width="1" height="1" fill="#0a78ff"/><rect x="150" y="559" width="1" height="1" fill="#0a78ff"/><rect x="151" y="559" width="1" height="1" fill="#0a78ff"/><rect x="152" y="559" width="1" height="1" fill="#0a78ff"/><rect x="153" y="559" width="1" height="1" fill="#0a78ff"/><rect x="154" y="559" width="1" height="1" fill="#0a78ff"/><rect x="155" y="559" width="1" height="1" fill="#0a78ff"/><rect x="156" y="559" width="1" height="1" fill="#0a78ff"/><rect x="157" y="559" width="1" height="1" fill="#0a78ff"/><rect x="158" y="559" width="1" height="1" fill="#0a78ff"/><rect x="159" y="559" width="1" height="1" fill="#0a78ff"/><rect x="160" y="559" width="1" height="1" fill="#0a78ff"/><rect x="161" y="559" width="1" height="1" fill="#0a78ff"/><rect x="131" y="560" width="1" height="1" fill="#0a78ff"/><rect x="135" y="560" width="1" height="1" fill="#0a78ff"/><rect x="139" y="560" width="1" height="1" fill="#0a78ff"/><rect x="141" y="560" width="1" height="1" fill="#0a78ff"/><rect x="142" y="560" width="1" height="1" fill="#0a78ff"/><rect x="143" y="560" width="1" height="1" fill="#0a78ff"/><rect x="144" y="560" width="1" height="1" fill="#0a78ff"/><rect x="146" y="560" width="1" height="1" fill="#0a78ff"/><rect x="147" y="560" width="1" height="1" fill="#0a78ff"/><rect x="148" y="560" width="1" height="1" fill="#0a78ff"/><rect x="149" y="560" width="1" height="1" fill="#0a78ff"/><rect x="150" y="560" width="1" height="1" fill="#0a78ff"/><rect x="153" y="560" width="1" height="1" fill="#0a78ff"/><rect x="154" y="560" width="1" height="1" fill="#0a78ff"/><rect x="157" y="560" width="1" height="1" fill="#0a78ff"/><rect x="159" y="560" width="1" height="1" fill="#0a78ff"/><rect x="160" y="560" width="1" height="1" fill="#0a78ff"/><rect x="161" y="560" width="1" height="1" fill="#00e4ff"/><rect x="134" y="561" width="1" height="1" fill="#0a78ff"/><rect x="136" y="561" width="1" height="1" fill="#0a78ff"/><rect x="138" y="561" width="1" height="1" fill="#0a78ff"/><rect x="139" y="561" width="1" height="1" fill="#0a78ff"/><rect x="140" y="561" width="1" height="1" fill="#0a78ff"/><rect x="141" y="561" width="1" height="1" fill="#0a78ff"/><rect x="142" y="561" width="1" height="1" fill="#0a78ff"/><rect x="144" y="561" width="1" height="1" fill="#0a78ff"/><rect x="146" y="561" width="1" height="1" fill="#0a78ff"/><rect x="149" y="561" width="1" height="1" fill="#0a78ff"/><rect x="150" y="561" width="1" height="1" fill="#0a78ff"/><rect x="151" y="561" width="1" height="1" fill="#0a78ff"/><rect x="153" y="561" width="1" height="1" fill="#0a78ff"/><rect x="154" y="561" width="1" height="1" fill="#0a78ff"/><rect x="155" y="561" width="1" height="1" fill="#0a78ff"/><rect x="156" y="561" width="1" height="1" fill="#0a78ff"/><rect x="157" y="561" width="1" height="1" fill="#0a78ff"/><rect x="158" y="561" width="1" height="1" fill="#0a78ff"/><rect x="159" y="561" width="1" height="1" fill="#0a78ff"/><rect x="161" y="561" width="1" height="1" fill="#0a78ff"/><rect x="162" y="561" width="1" height="1" fill="#0a78ff"/><rect x="132" y="562" width="1" height="1" fill="#0a78ff"/><rect x="133" y="562" width="1" height="1" fill="#0a78ff"/><rect x="135" y="562" width="1" height="1" fill="#0a78ff"/><rect x="136" y="562" width="1" height="1" fill="#0a78ff"/><rect x="137" y="562" width="1" height="1" fill="#0a78ff"/><rect x="138" y="562" width="1" height="1" fill="#0a78ff"/><rect x="139" y="562" width="1" height="1" fill="#0a78ff"/><rect x="142" y="562" width="1" height="1" fill="#0a78ff"/><rect x="143" y="562" width="1" height="1" fill="#0a78ff"/><rect x="144" y="562" width="1" height="1" fill="#0a78ff"/><rect x="145" y="562" width="1" height="1" fill="#0a78ff"/><rect x="147" y="562" width="1" height="1" fill="#0a78ff"/><rect x="149" y="562" width="1" height="1" fill="#0a78ff"/><rect x="150" y="562" width="1" height="1" fill="#0a78ff"/><rect x="151" y="562" width="1" height="1" fill="#0a78ff"/><rect x="152" y="562" width="1" height="1" fill="#0a78ff"/><rect x="153" y="562" width="1" height="1" fill="#0a78ff"/><rect x="155" y="562" width="1" height="1" fill="#0a78ff"/><rect x="157" y="562" width="1" height="1" fill="#0a78ff"/><rect x="160" y="562" width="1" height="1" fill="#0a78ff"/><rect x="161" y="562" width="1" height="1" fill="#0a78ff"/><rect x="162" y="562" width="1" height="1" fill="#0a78ff"/><rect x="132" y="563" width="1" height="1" fill="#0a78ff"/><rect x="133" y="563" width="1" height="1" fill="#0a78ff"/><rect x="135" y="563" width="1" height="1" fill="#0a78ff"/><rect x="136" y="563" width="1" height="1" fill="#0a78ff"/><rect x="137" y="563" width="1" height="1" fill="#0a78ff"/><rect x="138" y="563" width="1" height="1" fill="#0a78ff"/><rect x="141" y="563" width="1" height="1" fill="#0a78ff"/><rect x="142" y="563" width="1" height="1" fill="#0a78ff"/><rect x="143" y="563" width="1" height="1" fill="#0a78ff"/><rect x="145" y="563" width="1" height="1" fill="#0a78ff"/><rect x="147" y="563" width="1" height="1" fill="#0a78ff"/><rect x="148" y="563" width="1" height="1" fill="#0a78ff"/><rect x="149" y="563" width="1" height="1" fill="#0a78ff"/><rect x="150" y="563" width="1" height="1" fill="#0a78ff"/><rect x="151" y="563" width="1" height="1" fill="#0a78ff"/><rect x="152" y="563" width="1" height="1" fill="#0a78ff"/><rect x="153" y="563" width="1" height="1" fill="#0a78ff"/><rect x="155" y="563" width="1" height="1" fill="#0a78ff"/><rect x="156" y="563" width="1" height="1" fill="#0a78ff"/><rect x="160" y="563" width="1" height="1" fill="#0a78ff"/><rect x="161" y="563" width="1" height="1" fill="#0a78ff"/><rect x="162" y="563" width="1" height="1" fill="#0a78ff"/><rect x="128" y="564" width="1" height="1" fill="#0a78ff"/><rect x="137" y="564" width="1" height="1" fill="#0a78ff"/><rect x="138" y="564" width="1" height="1" fill="#0a78ff"/><rect x="140" y="564" width="1" height="1" fill="#0a78ff"/><rect x="142" y="564" width="1" height="1" fill="#0a78ff"/><rect x="143" y="564" width="1" height="1" fill="#0a78ff"/><rect x="144" y="564" width="1" height="1" fill="#0a78ff"/><rect x="145" y="564" width="1" height="1" fill="#0a78ff"/><rect x="147" y="564" width="1" height="1" fill="#0a78ff"/><rect x="148" y="564" width="1" height="1" fill="#0a78ff"/><rect x="150" y="564" width="1" height="1" fill="#0a78ff"/><rect x="151" y="564" width="1" height="1" fill="#0a78ff"/><rect x="152" y="564" width="1" height="1" fill="#0a78ff"/><rect x="153" y="564" width="1" height="1" fill="#0a78ff"/><rect x="154" y="564" width="1" height="1" fill="#0a78ff"/><rect x="155" y="564" width="1" height="1" fill="#0a78ff"/><rect x="156" y="564" width="1" height="1" fill="#0a78ff"/><rect x="157" y="564" width="1" height="1" fill="#0a78ff"/><rect x="158" y="564" width="1" height="1" fill="#0a78ff"/><rect x="160" y="564" width="1" height="1" fill="#0a78ff"/><rect x="161" y="564" width="1" height="1" fill="#0a78ff"/><rect x="134" y="565" width="1" height="1" fill="#0a78ff"/><rect x="137" y="565" width="1" height="1" fill="#0a78ff"/><rect x="138" y="565" width="1" height="1" fill="#0a78ff"/><rect x="139" y="565" width="1" height="1" fill="#0a78ff"/><rect x="140" y="565" width="1" height="1" fill="#0a78ff"/><rect x="141" y="565" width="1" height="1" fill="#0a78ff"/><rect x="142" y="565" width="1" height="1" fill="#0a78ff"/><rect x="143" y="565" width="1" height="1" fill="#0a78ff"/><rect x="145" y="565" width="1" height="1" fill="#0a78ff"/><rect x="147" y="565" width="1" height="1" fill="#0a78ff"/><rect x="148" y="565" width="1" height="1" fill="#0a78ff"/><rect x="150" y="565" width="1" height="1" fill="#0a78ff"/><rect x="152" y="565" width="1" height="1" fill="#0a78ff"/><rect x="153" y="565" width="1" height="1" fill="#0a78ff"/><rect x="155" y="565" width="1" height="1" fill="#0a78ff"/><rect x="156" y="565" width="1" height="1" fill="#0a78ff"/><rect x="157" y="565" width="1" height="1" fill="#0a78ff"/><rect x="158" y="565" width="1" height="1" fill="#0a78ff"/><rect x="159" y="565" width="1" height="1" fill="#0a78ff"/><rect x="160" y="565" width="1" height="1" fill="#0a78ff"/><rect x="161" y="565" width="1" height="1" fill="#0a78ff"/><rect x="132" y="566" width="1" height="1" fill="#0a78ff"/><rect x="138" y="566" width="1" height="1" fill="#0a78ff"/><rect x="139" y="566" width="1" height="1" fill="#0a78ff"/><rect x="140" y="566" width="1" height="1" fill="#0a78ff"/><rect x="141" y="566" width="1" height="1" fill="#0a78ff"/><rect x="142" y="566" width="1" height="1" fill="#0a78ff"/><rect x="143" y="566" width="1" height="1" fill="#0a78ff"/><rect x="145" y="566" width="1" height="1" fill="#0a78ff"/><rect x="146" y="566" width="1" height="1" fill="#0a78ff"/><rect x="147" y="566" width="1" height="1" fill="#0a78ff"/><rect x="149" y="566" width="1" height="1" fill="#0a78ff"/><rect x="154" y="566" width="1" height="1" fill="#0a78ff"/><rect x="158" y="566" width="1" height="1" fill="#0a78ff"/><rect x="159" y="566" width="1" height="1" fill="#0a78ff"/><rect x="160" y="566" width="1" height="1" fill="#0a78ff"/><rect x="161" y="566" width="1" height="1" fill="#0a78ff"/><rect x="132" y="567" width="1" height="1" fill="#0a78ff"/><rect x="133" y="567" width="1" height="1" fill="#0a78ff"/><rect x="137" y="567" width="1" height="1" fill="#0a78ff"/><rect x="139" y="567" width="1" height="1" fill="#0a78ff"/><rect x="140" y="567" width="1" height="1" fill="#0a78ff"/><rect x="141" y="567" width="1" height="1" fill="#0a78ff"/><rect x="142" y="567" width="1" height="1" fill="#0a78ff"/><rect x="144" y="567" width="1" height="1" fill="#0a78ff"/><rect x="145" y="567" width="1" height="1" fill="#0a78ff"/><rect x="146" y="567" width="1" height="1" fill="#0a78ff"/><rect x="147" y="567" width="1" height="1" fill="#0a78ff"/><rect x="148" y="567" width="1" height="1" fill="#0a78ff"/><rect x="149" y="567" width="1" height="1" fill="#0a78ff"/><rect x="150" y="567" width="1" height="1" fill="#0a78ff"/><rect x="151" y="567" width="1" height="1" fill="#0a78ff"/><rect x="152" y="567" width="1" height="1" fill="#0a78ff"/><rect x="153" y="567" width="1" height="1" fill="#0a78ff"/><rect x="154" y="567" width="1" height="1" fill="#0a78ff"/><rect x="155" y="567" width="1" height="1" fill="#0a78ff"/><rect x="156" y="567" width="1" height="1" fill="#0a78ff"/><rect x="158" y="567" width="1" height="1" fill="#0a78ff"/><rect x="160" y="567" width="1" height="1" fill="#0a78ff"/><rect x="162" y="567" width="1" height="1" fill="#0a78ff"/><rect x="129" y="568" width="1" height="1" fill="#0a78ff"/><rect x="131" y="568" width="1" height="1" fill="#0a78ff"/><rect x="132" y="568" width="1" height="1" fill="#0a78ff"/><rect x="134" y="568" width="1" height="1" fill="#0a78ff"/><rect x="135" y="568" width="1" height="1" fill="#0a78ff"/><rect x="136" y="568" width="1" height="1" fill="#0a78ff"/><rect x="140" y="568" width="1" height="1" fill="#0a78ff"/><rect x="142" y="568" width="1" height="1" fill="#0a78ff"/><rect x="143" y="568" width="1" height="1" fill="#0a78ff"/><rect x="144" y="568" width="1" height="1" fill="#0a78ff"/><rect x="145" y="568" width="1" height="1" fill="#0a78ff"/><rect x="146" y="568" width="1" height="1" fill="#0a78ff"/><rect x="147" y="568" width="1" height="1" fill="#0a78ff"/><rect x="148" y="568" width="1" height="1" fill="#0a78ff"/><rect x="149" y="568" width="1" height="1" fill="#0a78ff"/><rect x="150" y="568" width="1" height="1" fill="#0a78ff"/><rect x="152" y="568" width="1" height="1" fill="#0a78ff"/><rect x="154" y="568" width="1" height="1" fill="#0a78ff"/><rect x="155" y="568" width="1" height="1" fill="#0a78ff"/><rect x="157" y="568" width="1" height="1" fill="#0a78ff"/><rect x="158" y="568" width="1" height="1" fill="#0a78ff"/><rect x="161" y="568" width="1" height="1" fill="#0a78ff"/><rect x="128" y="569" width="1" height="1" fill="#0a78ff"/><rect x="133" y="569" width="1" height="1" fill="#0a78ff"/><rect x="134" y="569" width="1" height="1" fill="#00e4ff"/><rect x="135" y="569" width="1" height="1" fill="#0a78ff"/><rect x="136" y="569" width="1" height="1" fill="#0a78ff"/><rect x="138" y="569" width="1" height="1" fill="#0a78ff"/><rect x="140" y="569" width="1" height="1" fill="#0a78ff"/><rect x="141" y="569" width="1" height="1" fill="#0a78ff"/><rect x="142" y="569" width="1" height="1" fill="#0a78ff"/><rect x="143" y="569" width="1" height="1" fill="#0a78ff"/><rect x="144" y="569" width="1" height="1" fill="#0a78ff"/><rect x="145" y="569" width="1" height="1" fill="#0a78ff"/><rect x="146" y="569" width="1" height="1" fill="#0a78ff"/><rect x="147" y="569" width="1" height="1" fill="#0a78ff"/><rect x="152" y="569" width="1" height="1" fill="#0a78ff"/><rect x="153" y="569" width="1" height="1" fill="#0a78ff"/><rect x="154" y="569" width="1" height="1" fill="#0a78ff"/><rect x="157" y="569" width="1" height="1" fill="#0a78ff"/><rect x="158" y="569" width="1" height="1" fill="#0a78ff"/><rect x="159" y="569" width="1" height="1" fill="#0a78ff"/><rect x="161" y="569" width="1" height="1" fill="#0a78ff"/><rect x="129" y="570" width="1" height="1" fill="#0a78ff"/><rect x="130" y="570" width="1" height="1" fill="#00e4ff"/><rect x="134" y="570" width="1" height="1" fill="#0a78ff"/><rect x="135" y="570" width="1" height="1" fill="#0a78ff"/><rect x="136" y="570" width="1" height="1" fill="#0a78ff"/><rect x="139" y="570" width="1" height="1" fill="#0a78ff"/><rect x="140" y="570" width="1" height="1" fill="#0a78ff"/><rect x="141" y="570" width="1" height="1" fill="#0a78ff"/><rect x="142" y="570" width="1" height="1" fill="#0a78ff"/><rect x="145" y="570" width="1" height="1" fill="#0a78ff"/><rect x="146" y="570" width="1" height="1" fill="#0a78ff"/><rect x="147" y="570" width="1" height="1" fill="#0a78ff"/><rect x="148" y="570" width="1" height="1" fill="#0a78ff"/><rect x="150" y="570" width="1" height="1" fill="#0a78ff"/><rect x="151" y="570" width="1" height="1" fill="#0a78ff"/><rect x="153" y="570" width="1" height="1" fill="#0a78ff"/><rect x="154" y="570" width="1" height="1" fill="#0a78ff"/><rect x="156" y="570" width="1" height="1" fill="#0a78ff"/><rect x="158" y="570" width="1" height="1" fill="#0a78ff"/><rect x="117" y="571" width="1" height="1" fill="#00e4ff"/><rect x="125" y="571" width="1" height="1" fill="#00e4ff"/><rect x="130" y="571" width="1" height="1" fill="#00e4ff"/><rect x="132" y="571" width="1" height="1" fill="#0a78ff"/><rect x="133" y="571" width="1" height="1" fill="#0a78ff"/><rect x="135" y="571" width="1" height="1" fill="#00e4ff"/><rect x="136" y="571" width="1" height="1" fill="#00e4ff"/><rect x="139" y="571" width="1" height="1" fill="#0a78ff"/><rect x="141" y="571" width="1" height="1" fill="#0a78ff"/><rect x="142" y="571" width="1" height="1" fill="#0a78ff"/><rect x="144" y="571" width="1" height="1" fill="#0a78ff"/><rect x="146" y="571" width="1" height="1" fill="#0a78ff"/><rect x="149" y="571" width="1" height="1" fill="#0a78ff"/><rect x="150" y="571" width="1" height="1" fill="#0a78ff"/><rect x="151" y="571" width="1" height="1" fill="#0a78ff"/><rect x="152" y="571" width="1" height="1" fill="#0a78ff"/><rect x="154" y="571" width="1" height="1" fill="#0a78ff"/><rect x="157" y="571" width="1" height="1" fill="#0a78ff"/><rect x="158" y="571" width="1" height="1" fill="#0a78ff"/><rect x="129" y="572" width="1" height="1" fill="#00e4ff"/><rect x="135" y="572" width="1" height="1" fill="#0a78ff"/><rect x="136" y="572" width="1" height="1" fill="#00e4ff"/><rect x="137" y="572" width="1" height="1" fill="#0a78ff"/><rect x="138" y="572" width="1" height="1" fill="#00e4ff"/><rect x="140" y="572" width="1" height="1" fill="#0a78ff"/><rect x="141" y="572" width="1" height="1" fill="#0a78ff"/><rect x="142" y="572" width="1" height="1" fill="#0a78ff"/><rect x="146" y="572" width="1" height="1" fill="#0a78ff"/><rect x="147" y="572" width="1" height="1" fill="#0a78ff"/><rect x="148" y="572" width="1" height="1" fill="#0a78ff"/><rect x="149" y="572" width="1" height="1" fill="#0a78ff"/><rect x="154" y="572" width="1" height="1" fill="#0a78ff"/><rect x="156" y="572" width="1" height="1" fill="#0a78ff"/><rect x="157" y="572" width="1" height="1" fill="#0a78ff"/><rect x="158" y="572" width="1" height="1" fill="#0a78ff"/><rect x="161" y="572" width="1" height="1" fill="#0a78ff"/><rect x="119" y="573" width="1" height="1" fill="#00e4ff"/><rect x="125" y="573" width="1" height="1" fill="#00e4ff"/><rect x="126" y="573" width="1" height="1" fill="#00e4ff"/><rect x="128" y="573" width="1" height="1" fill="#0a78ff"/><rect x="129" y="573" width="1" height="1" fill="#00e4ff"/><rect x="130" y="573" width="1" height="1" fill="#00e4ff"/><rect x="132" y="573" width="1" height="1" fill="#00e4ff"/><rect x="133" y="573" width="1" height="1" fill="#00e4ff"/><rect x="134" y="573" width="1" height="1" fill="#0a78ff"/><rect x="138" y="573" width="1" height="1" fill="#0a78ff"/><rect x="139" y="573" width="1" height="1" fill="#0a78ff"/><rect x="140" y="573" width="1" height="1" fill="#0a78ff"/><rect x="141" y="573" width="1" height="1" fill="#0a78ff"/><rect x="142" y="573" width="1" height="1" fill="#0a78ff"/><rect x="143" y="573" width="1" height="1" fill="#0a78ff"/><rect x="144" y="573" width="1" height="1" fill="#0a78ff"/><rect x="146" y="573" width="1" height="1" fill="#0a78ff"/><rect x="147" y="573" width="1" height="1" fill="#0a78ff"/><rect x="148" y="573" width="1" height="1" fill="#0a78ff"/><rect x="151" y="573" width="1" height="1" fill="#0a78ff"/><rect x="152" y="573" width="1" height="1" fill="#0a78ff"/><rect x="160" y="573" width="1" height="1" fill="#0a78ff"/><rect x="162" y="573" width="1" height="1" fill="#0a78ff"/><rect x="117" y="574" width="1" height="1" fill="#00e4ff"/><rect x="121" y="574" width="1" height="1" fill="#00e4ff"/><rect x="125" y="574" width="1" height="1" fill="#00e4ff"/><rect x="126" y="574" width="1" height="1" fill="#00e4ff"/><rect x="127" y="574" width="1" height="1" fill="#00e4ff"/><rect x="129" y="574" width="1" height="1" fill="#00e4ff"/><rect x="130" y="574" width="1" height="1" fill="#00e4ff"/><rect x="131" y="574" width="1" height="1" fill="#00e4ff"/><rect x="132" y="574" width="1" height="1" fill="#00e4ff"/><rect x="133" y="574" width="1" height="1" fill="#0a78ff"/><rect x="134" y="574" width="1" height="1" fill="#0a78ff"/><rect x="135" y="574" width="1" height="1" fill="#0a78ff"/><rect x="138" y="574" width="1" height="1" fill="#0a78ff"/><rect x="140" y="574" width="1" height="1" fill="#0a78ff"/><rect x="141" y="574" width="1" height="1" fill="#0a78ff"/><rect x="143" y="574" width="1" height="1" fill="#0a78ff"/><rect x="145" y="574" width="1" height="1" fill="#0a78ff"/><rect x="146" y="574" width="1" height="1" fill="#0a78ff"/><rect x="148" y="574" width="1" height="1" fill="#0a78ff"/><rect x="150" y="574" width="1" height="1" fill="#0a78ff"/><rect x="153" y="574" width="1" height="1" fill="#0a78ff"/><rect x="155" y="574" width="1" height="1" fill="#0a78ff"/><rect x="157" y="574" width="1" height="1" fill="#0a78ff"/><rect x="162" y="574" width="1" height="1" fill="#0a78ff"/><rect x="118" y="575" width="1" height="1" fill="#00e4ff"/><rect x="123" y="575" width="1" height="1" fill="#00e4ff"/><rect x="124" y="575" width="1" height="1" fill="#00e4ff"/><rect x="132" y="575" width="1" height="1" fill="#0a78ff"/><rect x="134" y="575" width="1" height="1" fill="#0a78ff"/><rect x="136" y="575" width="1" height="1" fill="#0a78ff"/><rect x="137" y="575" width="1" height="1" fill="#0a78ff"/><rect x="138" y="575" width="1" height="1" fill="#0a78ff"/><rect x="140" y="575" width="1" height="1" fill="#0a78ff"/><rect x="141" y="575" width="1" height="1" fill="#0a78ff"/><rect x="144" y="575" width="1" height="1" fill="#0a78ff"/><rect x="145" y="575" width="1" height="1" fill="#0a78ff"/><rect x="146" y="575" width="1" height="1" fill="#0a78ff"/><rect x="147" y="575" width="1" height="1" fill="#0a78ff"/><rect x="148" y="575" width="1" height="1" fill="#0a78ff"/><rect x="151" y="575" width="1" height="1" fill="#0a78ff"/><rect x="158" y="575" width="1" height="1" fill="#0a78ff"/><rect x="123" y="576" width="1" height="1" fill="#00e4ff"/><rect x="132" y="576" width="1" height="1" fill="#0a78ff"/><rect x="133" y="576" width="1" height="1" fill="#0a78ff"/><rect x="140" y="576" width="1" height="1" fill="#0a78ff"/><rect x="141" y="576" width="1" height="1" fill="#00e4ff"/><rect x="148" y="576" width="1" height="1" fill="#0a78ff"/><rect x="149" y="576" width="1" height="1" fill="#0a78ff"/><rect x="152" y="576" width="1" height="1" fill="#0a78ff"/><rect x="159" y="576" width="1" height="1" fill="#0a78ff"/><rect x="160" y="576" width="1" height="1" fill="#0a78ff"/><rect x="127" y="577" width="1" height="1" fill="#00e4ff"/><rect x="132" y="577" width="1" height="1" fill="#00e4ff"/><rect x="139" y="577" width="1" height="1" fill="#00e4ff"/><rect x="140" y="577" width="1" height="1" fill="#0a78ff"/><rect x="143" y="577" width="1" height="1" fill="#0a78ff"/><rect x="149" y="577" width="1" height="1" fill="#0a78ff"/><rect x="157" y="577" width="1" height="1" fill="#0a78ff"/><rect x="159" y="577" width="1" height="1" fill="#0a78ff"/><rect x="161" y="577" width="1" height="1" fill="#0a78ff"/><rect x="136" y="578" width="1" height="1" fill="#0a78ff"/><rect x="138" y="578" width="1" height="1" fill="#0a78ff"/><rect x="141" y="578" width="1" height="1" fill="#0a78ff"/><rect x="150" y="578" width="1" height="1" fill="#0a78ff"/><rect x="155" y="578" width="1" height="1" fill="#0a78ff"/><rect x="159" y="578" width="1" height="1" fill="#0a78ff"/><rect x="125" y="579" width="1" height="1" fill="#00e4ff"/><rect x="135" y="579" width="1" height="1" fill="#0a78ff"/><rect x="148" y="579" width="1" height="1" fill="#0a78ff"/><rect x="151" y="579" width="1" height="1" fill="#0a78ff"/><rect x="152" y="579" width="1" height="1" fill="#0a78ff"/><rect x="153" y="579" width="1" height="1" fill="#0a78ff"/><rect x="161" y="579" width="1" height="1" fill="#0a78ff"/><rect x="122" y="580" width="1" height="1" fill="#00e4ff"/><rect x="123" y="580" width="1" height="1" fill="#00e4ff"/><rect x="132" y="580" width="1" height="1" fill="#0a78ff"/><rect x="137" y="580" width="1" height="1" fill="#0a78ff"/><rect x="138" y="580" width="1" height="1" fill="#00e4ff"/><rect x="149" y="580" width="1" height="1" fill="#0a78ff"/><rect x="154" y="580" width="1" height="1" fill="#0a78ff"/><rect x="158" y="580" width="1" height="1" fill="#0a78ff"/><rect x="160" y="580" width="1" height="1" fill="#0a78ff"/><rect x="161" y="580" width="1" height="1" fill="#0a78ff"/><rect x="162" y="580" width="1" height="1" fill="#0a78ff"/></svg>
<div class="a" style="left:-2px;top:585px;width:100px;height:19px;box-shadow:inset -1px -1px #404040, inset 1px 1px #fff, inset -2px -2px #808080;background:#d4d0c8"></div>
<div class="a" style="left:99px;top:585px;width:70px;height:19px;box-shadow:inset -1px -1px #404040, inset 1px 1px #fff, inset -2px -2px #808080;background:#d4d0c8"></div>
<div class="a" style="left:0px;top:611px;width:161px;height:1px;background:#808080"></div>
<div class="a" style="left:0px;top:612px;width:161px;height:1px;background:#fff"></div>
<svg class="a" style="left:0;top:0" width="730" height="623" viewBox="0 0 730 623">
<text x="8.2" y="502" font-family="Liberation Sans" font-size="11" font-weight="normal" fill="#000" textLength="120.99999999999999" lengthAdjust="spacingAndGlyphs" >УС_микрофо 2тр_3,6дб</text>
<text x="157.4" y="502" font-family="Liberation Sans" font-size="11" font-weight="normal" fill="#000" textLength="8.199999999999989" lengthAdjust="spacingAndGlyphs" >У</text>
<text x="-0.1" y="538" font-family="Liberation Sans" font-size="11" font-weight="normal" fill="#000" textLength="14.4" lengthAdjust="spacingAndGlyphs" >:34</text>
<text x="7.6" y="570" font-family="Liberation Sans" font-size="19" font-weight="normal" fill="#000" textLength="138.5" lengthAdjust="spacingAndGlyphs" stroke="#000" stroke-width="0.45">У Самоделкина</text>
<text x="1.3" y="599" font-family="Liberation Sans" font-size="11" font-weight="normal" fill="#000" textLength="91.8" lengthAdjust="spacingAndGlyphs" >Проводящий слой</text>
<text x="104.2" y="599" font-family="Liberation Sans" font-size="11" font-weight="normal" fill="#000" textLength="57.89999999999999" lengthAdjust="spacingAndGlyphs" >Моделиров</text>
</svg><div class="a" style="left:178px;top:195px;width:560px;height:3px;background:#fff;border-top:1px solid #d4d0c8;border-left:1px solid #d4d0c8"></div>
<div class="a" style="left:161px;top:198px;width:580px;height:430px;background:#d4d0c8;"></div>
<div class="a" style="left:163px;top:200px;width:580px;height:18px;background:linear-gradient(to right,#0a246a,#a6caf0)"></div>
<div class="a" style="left:718px;top:202px;width:16px;height:14px;background:#d4d0c8;box-shadow:inset -1px -1px #404040, inset 1px 1px #fff, inset -2px -2px #808080"></div>
<svg class="a" style="left:718px;top:202px" width="16" height="14"><path d="M4,3 L11,10 M11,3 L4,10" stroke="#000" stroke-width="1.6"/></svg>
<div class="a" style="left:164px;top:221px;width:570px;height:247px;background:#000;box-shadow:inset 1px 1px #808080, inset 2px 2px #404040;"></div>
<svg class="a" style="left:0;top:0" width="730" height="623" viewBox="0 0 730 623">
<g shape-rendering="crispEdges">
<rect x="174.5" y="230.5" width="551" height="229" fill="none" stroke="#fff"/>
<line x1="229.5" y1="235" x2="229.5" y2="459" stroke="#c8c8c8" stroke-dasharray="3 3"/><rect x="229" y="231" width="1" height="1" fill="#c8c8c8"/>
<line x1="284.5" y1="235" x2="284.5" y2="459" stroke="#c8c8c8" stroke-dasharray="3 3"/><rect x="284" y="231" width="1" height="1" fill="#c8c8c8"/>
<line x1="339.5" y1="235" x2="339.5" y2="459" stroke="#c8c8c8" stroke-dasharray="3 3"/><rect x="339" y="231" width="1" height="1" fill="#c8c8c8"/>
<line x1="394.5" y1="235" x2="394.5" y2="459" stroke="#c8c8c8" stroke-dasharray="3 3"/><rect x="394" y="231" width="1" height="1" fill="#c8c8c8"/>
<line x1="450.5" y1="235" x2="450.5" y2="459" stroke="#c8c8c8" stroke-dasharray="3 3"/><rect x="450" y="231" width="1" height="1" fill="#c8c8c8"/>
<line x1="505.5" y1="235" x2="505.5" y2="459" stroke="#c8c8c8" stroke-dasharray="3 3"/><rect x="505" y="231" width="1" height="1" fill="#c8c8c8"/>
<line x1="560.5" y1="235" x2="560.5" y2="459" stroke="#c8c8c8" stroke-dasharray="3 3"/><rect x="560" y="231" width="1" height="1" fill="#c8c8c8"/>
<line x1="615.5" y1="235" x2="615.5" y2="459" stroke="#c8c8c8" stroke-dasharray="3 3"/><rect x="615" y="231" width="1" height="1" fill="#c8c8c8"/>
<line x1="670.5" y1="235" x2="670.5" y2="459" stroke="#c8c8c8" stroke-dasharray="3 3"/><rect x="670" y="231" width="1" height="1" fill="#c8c8c8"/>
<line x1="180" y1="268.5" x2="725" y2="268.5" stroke="#c8c8c8" stroke-dasharray="3 3"/>
<line x1="180" y1="306.5" x2="725" y2="306.5" stroke="#c8c8c8" stroke-dasharray="3 3"/>
<line x1="180" y1="383.5" x2="725" y2="383.5" stroke="#c8c8c8" stroke-dasharray="3 3"/>
<line x1="180" y1="421.5" x2="725" y2="421.5" stroke="#c8c8c8" stroke-dasharray="3 3"/>
<rect x="174" y="344" width="551" height="2" fill="#fff"/>
<rect x="185" y="346" width="1" height="1" fill="#e0e0e0"/>
<rect x="196" y="346" width="1" height="1" fill="#e0e0e0"/>
<rect x="207" y="346" width="1" height="1" fill="#e0e0e0"/>
<rect x="218" y="346" width="1" height="1" fill="#e0e0e0"/>
<rect x="229" y="346" width="1" height="1" fill="#e0e0e0"/>
<rect x="240" y="346" width="1" height="1" fill="#e0e0e0"/>
<rect x="251" y="346" width="1" height="1" fill="#e0e0e0"/>
<rect x="262" y="346" width="1" height="1" fill="#e0e0e0"/>
<rect x="273" y="346" width="1" height="1" fill="#e0e0e0"/>
<rect x="284" y="346" width="1" height="1" fill="#e0e0e0"/>
<rect x="295" y="346" width="1" height="1" fill="#e0e0e0"/>
<rect x="306" y="346" width="1" height="1" fill="#e0e0e0"/>
<rect x="317" y="346" width="1" height="1" fill="#e0e0e0"/>
<rect x="328" y="346" width="1" height="1" fill="#e0e0e0"/>
<rect x="339" y="346" width="1" height="1" fill="#e0e0e0"/>
<rect x="350" y="346" width="1" height="1" fill="#e0e0e0"/>
<rect x="361" y="346" width="1" height="1" fill="#e0e0e0"/>
<rect x="372" y="346" width="1" height="1" fill="#e0e0e0"/>
<rect x="383" y="346" width="1" height="1" fill="#e0e0e0"/>
<rect x="394" y="346" width="1" height="1" fill="#e0e0e0"/>
<rect x="405" y="346" width="1" height="1" fill="#e0e0e0"/>
<rect x="416" y="346" width="1" height="1" fill="#e0e0e0"/>
<rect x="427" y="346" width="1" height="1" fill="#e0e0e0"/>
<rect x="438" y="346" width="1" height="1" fill="#e0e0e0"/>
<rect x="449" y="346" width="1" height="1" fill="#e0e0e0"/>
<rect x="460" y="346" width="1" height="1" fill="#e0e0e0"/>
<rect x="471" y="346" width="1" height="1" fill="#e0e0e0"/>
<rect x="482" y="346" width="1" height="1" fill="#e0e0e0"/>
<rect x="493" y="346" width="1" height="1" fill="#e0e0e0"/>
<rect x="504" y="346" width="1" height="1" fill="#e0e0e0"/>
<rect x="515" y="346" width="1" height="1" fill="#e0e0e0"/>
<rect x="526" y="346" width="1" height="1" fill="#e0e0e0"/>
<rect x="537" y="346" width="1" height="1" fill="#e0e0e0"/>
<rect x="548" y="346" width="1" height="1" fill="#e0e0e0"/>
<rect x="559" y="346" width="1" height="1" fill="#e0e0e0"/>
<rect x="570" y="346" width="1" height="1" fill="#e0e0e0"/>
<rect x="581" y="346" width="1" height="1" fill="#e0e0e0"/>
<rect x="592" y="346" width="1" height="1" fill="#e0e0e0"/>
<rect x="603" y="346" width="1" height="1" fill="#e0e0e0"/>
<rect x="614" y="346" width="1" height="1" fill="#e0e0e0"/>
<rect x="625" y="346" width="1" height="1" fill="#e0e0e0"/>
<rect x="636" y="346" width="1" height="1" fill="#e0e0e0"/>
<rect x="647" y="346" width="1" height="1" fill="#e0e0e0"/>
<rect x="658" y="346" width="1" height="1" fill="#e0e0e0"/>
<rect x="669" y="346" width="1" height="1" fill="#e0e0e0"/>
<rect x="680" y="346" width="1" height="1" fill="#e0e0e0"/>
<rect x="691" y="346" width="1" height="1" fill="#e0e0e0"/>
<rect x="702" y="346" width="1" height="1" fill="#e0e0e0"/>
<rect x="713" y="346" width="1" height="1" fill="#e0e0e0"/>
<rect x="724" y="346" width="1" height="1" fill="#e0e0e0"/>
<rect x="174" y="254" width="1" height="1" fill="#00ff00"/>
</g>
<path d="M174.00,363.50 L192.20,363.50 L196.70,362.00 L199.50,358.50 L201.80,353.00 L204.10,345.00 L205.40,332.00 L206.80,315.00 L208.40,299.00 L210.10,282.00 L211.30,271.00 L212.00,267.50 L216.40,271.30 L220.80,267.50 L222.00,272.00 L223.20,283.00 L224.60,300.00 L226.00,316.00 L227.40,331.50 L228.80,345.00 L231.10,353.00 L233.90,359.60 L238.40,363.50 L261.10,363.50 L265.60,362.00 L268.40,358.50 L270.70,353.00 L273.00,345.00 L274.30,332.00 L275.70,315.00 L277.30,299.00 L279.00,282.00 L280.20,271.00 L280.90,267.50 L285.30,271.30 L289.70,267.50 L290.90,272.00 L292.10,283.00 L293.50,300.00 L294.90,316.00 L296.30,331.50 L297.70,345.00 L300.00,353.00 L302.80,359.60 L307.30,363.50 L330.00,363.50 L334.50,362.00 L337.30,358.50 L339.60,353.00 L341.90,345.00 L343.20,332.00 L344.60,315.00 L346.20,299.00 L347.90,282.00 L349.10,271.00 L349.80,267.50 L354.20,271.30 L358.60,267.50 L359.80,272.00 L361.00,283.00 L362.40,300.00 L363.80,316.00 L365.20,331.50 L366.60,345.00 L368.90,353.00 L371.70,359.60 L376.20,363.50 L398.90,363.50 L403.40,362.00 L406.20,358.50 L408.50,353.00 L410.80,345.00 L412.10,332.00 L413.50,315.00 L415.10,299.00 L416.80,282.00 L418.00,271.00 L418.70,267.50 L423.10,271.30 L427.50,267.50 L428.70,272.00 L429.90,283.00 L431.30,300.00 L432.70,316.00 L434.10,331.50 L435.50,345.00 L437.80,353.00 L440.60,359.60 L445.10,363.50 L467.80,363.50 L472.30,362.00 L475.10,358.50 L477.40,353.00 L479.70,345.00 L481.00,332.00 L482.40,315.00 L484.00,299.00 L485.70,282.00 L486.90,271.00 L487.60,267.50 L492.00,271.30 L496.40,267.50 L497.60,272.00 L498.80,283.00 L500.20,300.00 L501.60,316.00 L503.00,331.50 L504.40,345.00 L506.70,353.00 L509.50,359.60 L514.00,363.50 L536.70,363.50 L541.20,362.00 L544.00,358.50 L546.30,353.00 L548.60,345.00 L549.90,332.00 L551.30,315.00 L552.90,299.00 L554.60,282.00 L555.80,271.00 L556.50,267.50 L560.90,271.30 L565.30,267.50 L566.50,272.00 L567.70,283.00 L569.10,300.00 L570.50,316.00 L571.90,331.50 L573.30,345.00 L575.60,353.00 L578.40,359.60 L582.90,363.50 L605.60,363.50 L610.10,362.00 L612.90,358.50 L615.20,353.00 L617.50,345.00 L618.80,332.00 L620.20,315.00 L621.80,299.00 L623.50,282.00 L624.70,271.00 L625.40,267.50 L629.80,271.30 L634.20,267.50 L635.40,272.00 L636.60,283.00 L638.00,300.00 L639.40,316.00 L640.80,331.50 L642.20,345.00 L644.50,353.00 L647.30,359.60 L651.80,363.50 L674.50,363.50 L679.00,362.00 L681.80,358.50 L684.10,353.00 L686.40,345.00 L687.70,332.00 L689.10,315.00 L690.70,299.00 L692.40,282.00 L693.60,271.00 L694.30,267.50 L698.70,271.30 L703.10,267.50 L704.30,272.00 L705.50,283.00 L706.90,300.00 L708.30,316.00 L709.70,331.50 L711.10,345.00 L713.40,353.00 L716.20,359.60 L720.70,363.50 L725.00,363.50" fill="none" stroke="#ff0000" stroke-width="1.1" stroke-linejoin="round" shape-rendering="crispEdges"/>
<path d="M174.00,310.91 L175.00,311.34 L176.00,311.72 L177.00,312.05 L178.00,312.32 L179.00,312.53 L180.00,312.68 L181.00,312.77 L182.00,312.80 L183.00,312.77 L184.00,312.67 L185.00,312.51 L186.00,312.29 L187.00,312.02 L188.00,311.69 L189.00,311.30 L190.00,310.87 L191.00,310.39 L192.00,309.86 L193.00,309.30 L194.00,308.71 L195.00,308.09 L196.00,307.44 L197.00,306.78 L198.00,306.10 L199.00,305.42 L200.00,304.74 L201.00,304.06 L202.00,303.39 L203.00,302.74 L204.00,302.11 L205.00,301.50 L206.00,300.93 L207.00,300.39 L208.00,299.89 L209.00,299.44 L210.00,299.04 L211.00,298.69 L212.00,298.40 L213.00,298.16 L214.00,297.98 L215.00,297.86 L216.00,297.80 L217.00,297.81 L218.00,297.88 L219.00,298.01 L220.00,298.20 L221.00,298.45 L222.00,298.76 L223.00,299.12 L224.00,299.53 L225.00,299.99 L226.00,300.50 L227.00,301.04 L228.00,301.62 L229.00,302.23 L230.00,302.87 L231.00,303.52 L232.00,304.19 L233.00,304.87 L234.00,305.56 L235.00,306.24 L236.00,306.91 L237.00,307.57 L238.00,308.21 L239.00,308.83 L240.00,309.42 L241.00,309.97 L242.00,310.49 L243.00,310.96 L244.00,311.38 L245.00,311.76 L246.00,312.08 L247.00,312.34 L248.00,312.55 L249.00,312.69 L250.00,312.78 L251.00,312.80 L252.00,312.76 L253.00,312.66 L254.00,312.49 L255.00,312.27 L256.00,311.99 L257.00,311.65 L258.00,311.26 L259.00,310.82 L260.00,310.34 L261.00,309.81 L262.00,309.25 L263.00,308.65 L264.00,308.02 L265.00,307.38 L266.00,306.71 L267.00,306.03 L268.00,305.35 L269.00,304.67 L270.00,303.99 L271.00,303.32 L272.00,302.67 L273.00,302.04 L274.00,301.44 L275.00,300.87 L276.00,300.34 L277.00,299.85 L278.00,299.40 L279.00,299.00 L280.00,298.66 L281.00,298.37 L282.00,298.14 L283.00,297.96 L284.00,297.85 L285.00,297.80 L286.00,297.82 L287.00,297.89 L288.00,298.03 L289.00,298.22 L290.00,298.48 L291.00,298.79 L292.00,299.16 L293.00,299.57 L294.00,300.04 L295.00,300.55 L296.00,301.10 L297.00,301.68 L298.00,302.29 L299.00,302.93 L300.00,303.59 L301.00,304.26 L302.00,304.94 L303.00,305.62 L304.00,306.31 L305.00,306.98 L306.00,307.64 L307.00,308.28 L308.00,308.89 L309.00,309.48 L310.00,310.03 L311.00,310.54 L312.00,311.00 L313.00,311.42 L314.00,311.79 L315.00,312.11 L316.00,312.37 L317.00,312.57 L318.00,312.70 L319.00,312.78 L320.00,312.80 L321.00,312.75 L322.00,312.64 L323.00,312.47 L324.00,312.24 L325.00,311.96 L326.00,311.61 L327.00,311.22 L328.00,310.78 L329.00,310.29 L330.00,309.76 L331.00,309.19 L332.00,308.59 L333.00,307.96 L334.00,307.31 L335.00,306.64 L336.00,305.97 L337.00,305.28 L338.00,304.60 L339.00,303.92 L340.00,303.26 L341.00,302.61 L342.00,301.98 L343.00,301.38 L344.00,300.82 L345.00,300.29 L346.00,299.80 L347.00,299.36 L348.00,298.97 L349.00,298.63 L350.00,298.34 L351.00,298.12 L352.00,297.95 L353.00,297.84 L354.00,297.80 L355.00,297.82 L356.00,297.90 L357.00,298.04 L358.00,298.25 L359.00,298.51 L360.00,298.82 L361.00,299.20 L362.00,299.62 L363.00,300.09 L364.00,300.60 L365.00,301.15 L366.00,301.74 L367.00,302.36 L368.00,303.00 L369.00,303.65 L370.00,304.33 L371.00,305.01 L372.00,305.69 L373.00,306.37 L374.00,307.05 L375.00,307.70 L376.00,308.34 L377.00,308.95 L378.00,309.53 L379.00,310.08 L380.00,310.59 L381.00,311.05 L382.00,311.46 L383.00,311.83 L384.00,312.14 L385.00,312.39 L386.00,312.58 L387.00,312.72 L388.00,312.79 L389.00,312.80 L390.00,312.74 L391.00,312.63 L392.00,312.45 L393.00,312.22 L394.00,311.92 L395.00,311.58 L396.00,311.18 L397.00,310.73 L398.00,310.23 L399.00,309.70 L400.00,309.13 L401.00,308.53 L402.00,307.90 L403.00,307.24 L404.00,306.58 L405.00,305.90 L406.00,305.21 L407.00,304.53 L408.00,303.86 L409.00,303.19 L410.00,302.54 L411.00,301.92 L412.00,301.33 L413.00,300.76 L414.00,300.24 L415.00,299.75 L416.00,299.32 L417.00,298.93 L418.00,298.60 L419.00,298.32 L420.00,298.10 L421.00,297.94 L422.00,297.84 L423.00,297.80 L424.00,297.83 L425.00,297.91 L426.00,298.06 L427.00,298.27 L428.00,298.54 L429.00,298.86 L430.00,299.24 L431.00,299.66 L432.00,300.14 L433.00,300.65 L434.00,301.21 L435.00,301.80 L436.00,302.42 L437.00,303.06 L438.00,303.72 L439.00,304.40 L440.00,305.08 L441.00,305.76 L442.00,306.44 L443.00,307.11 L444.00,307.77 L445.00,308.40 L446.00,309.01 L447.00,309.59 L448.00,310.13 L449.00,310.63 L450.00,311.09 L451.00,311.50 L452.00,311.86 L453.00,312.16 L454.00,312.41 L455.00,312.60 L456.00,312.73 L457.00,312.79 L458.00,312.79 L459.00,312.73 L460.00,312.61 L461.00,312.43 L462.00,312.19 L463.00,311.89 L464.00,311.54 L465.00,311.13 L466.00,310.68 L467.00,310.18 L468.00,309.64 L469.00,309.07 L470.00,308.46 L471.00,307.83 L472.00,307.18 L473.00,306.51 L474.00,305.83 L475.00,305.15 L476.00,304.46 L477.00,303.79 L478.00,303.13 L479.00,302.48 L480.00,301.86 L481.00,301.27 L482.00,300.71 L483.00,300.19 L484.00,299.71 L485.00,299.28 L486.00,298.89 L487.00,298.57 L488.00,298.29 L489.00,298.08 L490.00,297.92 L491.00,297.83 L492.00,297.80 L493.00,297.83 L494.00,297.92 L495.00,298.08 L496.00,298.29 L497.00,298.57 L498.00,298.89 L499.00,299.28 L500.00,299.71 L501.00,300.19 L502.00,300.71 L503.00,301.27 L504.00,301.86 L505.00,302.48 L506.00,303.13 L507.00,303.79 L508.00,304.46 L509.00,305.15 L510.00,305.83 L511.00,306.51 L512.00,307.18 L513.00,307.83 L514.00,308.46 L515.00,309.07 L516.00,309.64 L517.00,310.18 L518.00,310.68 L519.00,311.13 L520.00,311.54 L521.00,311.89 L522.00,312.19 L523.00,312.43 L524.00,312.61 L525.00,312.73 L526.00,312.79 L527.00,312.79 L528.00,312.73 L529.00,312.60 L530.00,312.41 L531.00,312.16 L532.00,311.86 L533.00,311.50 L534.00,311.09 L535.00,310.63 L536.00,310.13 L537.00,309.59 L538.00,309.01 L539.00,308.40 L540.00,307.77 L541.00,307.11 L542.00,306.44 L543.00,305.76 L544.00,305.08 L545.00,304.40 L546.00,303.72 L547.00,303.06 L548.00,302.42 L549.00,301.80 L550.00,301.21 L551.00,300.65 L552.00,300.14 L553.00,299.66 L554.00,299.24 L555.00,298.86 L556.00,298.54 L557.00,298.27 L558.00,298.06 L559.00,297.91 L560.00,297.83 L561.00,297.80 L562.00,297.84 L563.00,297.94 L564.00,298.10 L565.00,298.32 L566.00,298.60 L567.00,298.93 L568.00,299.32 L569.00,299.75 L570.00,300.24 L571.00,300.76 L572.00,301.33 L573.00,301.92 L574.00,302.54 L575.00,303.19 L576.00,303.86 L577.00,304.53 L578.00,305.21 L579.00,305.90 L580.00,306.58 L581.00,307.24 L582.00,307.90 L583.00,308.53 L584.00,309.13 L585.00,309.70 L586.00,310.23 L587.00,310.73 L588.00,311.18 L589.00,311.58 L590.00,311.92 L591.00,312.22 L592.00,312.45 L593.00,312.63 L594.00,312.74 L595.00,312.80 L596.00,312.79 L597.00,312.72 L598.00,312.58 L599.00,312.39 L600.00,312.14 L601.00,311.83 L602.00,311.46 L603.00,311.05 L604.00,310.59 L605.00,310.08 L606.00,309.53 L607.00,308.95 L608.00,308.34 L609.00,307.70 L610.00,307.05 L611.00,306.37 L612.00,305.69 L613.00,305.01 L614.00,304.33 L615.00,303.65 L616.00,303.00 L617.00,302.36 L618.00,301.74 L619.00,301.15 L620.00,300.60 L621.00,300.09 L622.00,299.62 L623.00,299.20 L624.00,298.82 L625.00,298.51 L626.00,298.25 L627.00,298.04 L628.00,297.90 L629.00,297.82 L630.00,297.80 L631.00,297.84 L632.00,297.95 L633.00,298.12 L634.00,298.34 L635.00,298.63 L636.00,298.97 L637.00,299.36 L638.00,299.80 L639.00,300.29 L640.00,300.82 L641.00,301.38 L642.00,301.98 L643.00,302.61 L644.00,303.26 L645.00,303.92 L646.00,304.60 L647.00,305.28 L648.00,305.97 L649.00,306.64 L650.00,307.31 L651.00,307.96 L652.00,308.59 L653.00,309.19 L654.00,309.76 L655.00,310.29 L656.00,310.78 L657.00,311.22 L658.00,311.61 L659.00,311.96 L660.00,312.24 L661.00,312.47 L662.00,312.64 L663.00,312.75 L664.00,312.80 L665.00,312.78 L666.00,312.70 L667.00,312.57 L668.00,312.37 L669.00,312.11 L670.00,311.79 L671.00,311.42 L672.00,311.00 L673.00,310.54 L674.00,310.03 L675.00,309.48 L676.00,308.89 L677.00,308.28 L678.00,307.64 L679.00,306.98 L680.00,306.31 L681.00,305.62 L682.00,304.94 L683.00,304.26 L684.00,303.59 L685.00,302.93 L686.00,302.29 L687.00,301.68 L688.00,301.10 L689.00,300.55 L690.00,300.04 L691.00,299.57 L692.00,299.16 L693.00,298.79 L694.00,298.48 L695.00,298.22 L696.00,298.03 L697.00,297.89 L698.00,297.82 L699.00,297.80 L700.00,297.85 L701.00,297.96 L702.00,298.14 L703.00,298.37 L704.00,298.66 L705.00,299.00 L706.00,299.40 L707.00,299.85 L708.00,300.34 L709.00,300.87 L710.00,301.44 L711.00,302.04 L712.00,302.67 L713.00,303.32 L714.00,303.99 L715.00,304.67 L716.00,305.35 L717.00,306.03 L718.00,306.71 L719.00,307.38 L720.00,308.02 L721.00,308.65 L722.00,309.25 L723.00,309.81 L724.00,310.34 L725.00,310.82" fill="none" stroke="#00ff00" stroke-width="1.25" shape-rendering="crispEdges"/>
<rect x="252" y="230" width="1" height="229" fill="#00ffff" shape-rendering="crispEdges"/>
<rect x="281" y="230" width="1" height="229" fill="#ffff00" shape-rendering="crispEdges"/>
<path d="M244,222 L261,222 L252.5,230.5 Z" fill="#00ffff"/>
<path d="M275,224 L288,224 L281.5,230.5 Z" fill="#ffff00"/>
<path d="M251.5,223.5 h2 v5" stroke="#000" stroke-width="1.6" fill="none"/>
<path d="M279.5,225.5 h3 v1.5 l-3,2 h4" stroke="#000" stroke-width="1.3" fill="none"/>
<circle cx="252.5" cy="312.5" r="2.6" fill="none" stroke="#00ffff" stroke-width="1.2"/>
<circle cx="281.5" cy="298.5" r="2.6" fill="none" stroke="#ffff00" stroke-width="1.2"/>
</svg>
<div class="a" style="left:164px;top:467px;width:570px;height:1px;background:#d4d0c8"></div>
<div class="a" style="left:179px;top:468px;width:560px;height:1px;background:#fff"></div>
<div class="a" style="left:179px;top:469px;width:560px;height:14px;background-image:repeating-conic-gradient(#fff 0 25%, #d4d0c8 0 50%);background-size:2px 2px"></div>
<div class="a" style="left:163px;top:467px;width:16px;height:16px;box-shadow:inset -1px -1px #404040, inset -2px -2px #808080, inset 1px 1px #d4d0c8;background:#d4d0c8"><div class="a" style="left:5px;top:7px;width:0;height:0;border-right:3px solid #000;border-top:2.5px solid transparent;border-bottom:2.5px solid transparent"></div></div>
<div class="a" style="left:613px;top:469px;width:67px;height:14px;box-shadow:inset -1px -1px #404040, inset -2px -2px #808080, inset 1px 1px #d4d0c8, inset 2px 2px #fff;background:#d4d0c8"></div>
<div class="a" style="left:720px;top:467px;width:16px;height:16px;box-shadow:inset -1px -1px #404040, inset -2px -2px #808080, inset 1px 1px #d4d0c8;background:#d4d0c8"><div class="a" style="left:6px;top:5px;width:0;height:0;border-left:4px solid #000;border-top:3.5px solid transparent;border-bottom:3.5px solid transparent"></div></div>
<div class="a" style="left:163px;top:487px;width:60px;height:59px;box-shadow:inset 1px 1px #808080, inset -1px -1px #fff, inset 2px 2px #fff, inset -2px -2px #808080"></div>
<div class="a" style="left:188px;top:493px;width:15px;height:18px;box-shadow:inset -1px -1px #404040, inset 1px 1px #fff, inset -2px -2px #808080;background:#d4d0c8"><svg class="a" style="left:0;top:0" width="15" height="18"><path d="M4,8.5 L8.7,4.0 V7.0 H13 V10.0 H8.7 V13.0 Z" fill="#000"/></svg></div>
<div class="a" style="left:205px;top:493px;width:15px;height:18px;box-shadow:inset -1px -1px #404040, inset 1px 1px #fff, inset -2px -2px #808080;background:#d4d0c8"><svg class="a" style="left:0;top:0" width="15" height="18"><path d="M12,8.5 L7.3,4.0 V7.0 H3 V10.0 H7.3 V13.0 Z" fill="#000"/></svg></div>
<div class="a" style="left:188px;top:511px;width:15px;height:16px;box-shadow:inset -1px -1px #404040, inset 1px 1px #fff, inset -2px -2px #808080;background:#d4d0c8"><svg class="a" style="left:0;top:0" width="15" height="16"><path d="M4,7.5 L8.7,3.0 V6.0 H13 V9.0 H8.7 V12.0 Z" fill="#000"/></svg></div>
<div class="a" style="left:205px;top:511px;width:15px;height:16px;box-shadow:inset -1px -1px #404040, inset 1px 1px #fff, inset -2px -2px #808080;background:#d4d0c8"><svg class="a" style="left:0;top:0" width="15" height="16"><path d="M12,7.5 L7.3,3.0 V6.0 H3 V9.0 H7.3 V12.0 Z" fill="#000"/></svg></div>
<div class="a" style="left:223px;top:487px;width:357px;height:59px;box-shadow:inset 1px 1px #808080, inset -1px -1px #fff, inset 2px 2px #404040, inset -2px -2px #d4d0c8;background:#fff"></div>
<div class="a" style="left:586px;top:493px;width:64px;height:23px;box-shadow:inset -1px -1px #404040, inset 1px 1px #fff, inset -2px -2px #808080;background:#d4d0c8"></div>
<div class="a" style="left:586px;top:521px;width:64px;height:24px;box-shadow:inset -1px -1px #404040, inset 1px 1px #fff, inset -2px -2px #808080;background:#d4d0c8"></div>
<svg class="a" style="left:706px;top:536px" width="14" height="14"><path d="M3,11 A5.5,5.5 0 0 1 11,3" stroke="#808080" stroke-width="1.2" fill="none"/><path d="M4,10 A4.2,4.2 0 0 1 10,4" stroke="#404040" fill="none"/><path d="M11,3 A5.5,5.5 0 0 1 3,11" stroke="#fff" stroke-width="1.2" fill="none"/></svg>
<div class="a" style="left:163px;top:560px;width:134px;height:70px;border:1px solid #808080;box-shadow:inset 1px 1px #fff, 1px 1px #fff"></div>
<div class="a" style="left:170px;top:559px;width:58px;height:3px;background:#d4d0c8"></div>
<div class="a" style="left:298px;top:560px;width:128px;height:70px;border:1px solid #808080;box-shadow:inset 1px 1px #fff, 1px 1px #fff"></div>
<div class="a" style="left:304px;top:559px;width:46px;height:3px;background:#d4d0c8"></div>
<div class="a" style="left:427px;top:560px;width:128px;height:70px;border:1px solid #808080;box-shadow:inset 1px 1px #fff, 1px 1px #fff"></div>
<div class="a" style="left:433px;top:559px;width:45px;height:3px;background:#d4d0c8"></div>
<div class="a" style="left:557px;top:560px;width:180px;height:70px;border:1px solid #808080;box-shadow:inset 1px 1px #fff, 1px 1px #fff"></div>
<div class="a" style="left:564px;top:559px;width:82px;height:3px;background:#d4d0c8"></div>
<div class="a" style="left:209px;top:567px;width:64px;height:19px;box-shadow:inset 1px 1px #808080, inset -1px -1px #fff, inset 2px 2px #404040, inset -2px -2px #d4d0c8;background:#fff"></div>
<div class="a" style="left:273px;top:567px;width:19px;height:10px;box-shadow:inset -1px -1px #404040, inset 1px 1px #fff, inset -2px -2px #808080;background:#d4d0c8"><div class="a" style="left:7px;top:3px;width:0;height:0;border-bottom:2px solid #000;border-left:2px solid transparent;border-right:2px solid transparent"></div></div>
<div class="a" style="left:273px;top:577px;width:19px;height:9px;box-shadow:inset -1px -1px #404040, inset 1px 1px #fff, inset -2px -2px #808080;background:#d4d0c8"><div class="a" style="left:7px;top:3px;width:0;height:0;border-top:2px solid #000;border-left:2px solid transparent;border-right:2px solid transparent"></div></div>
<div class="a" style="left:231px;top:588px;width:61px;height:19px;box-shadow:inset 1px 1px #808080, inset -1px -1px #fff, inset 2px 2px #404040, inset -2px -2px #d4d0c8;background:#fff"></div>
<div class="a" style="left:170px;top:610px;width:27px;height:20px;box-shadow:inset 1px 1px #404040, inset -1px -1px #fff, inset 2px 2px #808080;background-image:repeating-conic-gradient(#fff 0 25%, #d4d0c8 0 50%);background-size:2px 2px"></div>
<div class="a" style="left:197px;top:610px;width:30px;height:20px;box-shadow:inset -1px -1px #404040, inset 1px 1px #fff, inset -2px -2px #808080;background:#d4d0c8"></div>
<div class="a" style="left:227px;top:610px;width:30px;height:20px;box-shadow:inset -1px -1px #404040, inset 1px 1px #fff, inset -2px -2px #808080;background:#d4d0c8"></div>
<div class="a" style="left:257px;top:610px;width:30px;height:20px;box-shadow:inset -1px -1px #404040, inset 1px 1px #fff, inset -2px -2px #808080;background:#d4d0c8"></div>
<div class="a" style="left:340px;top:567px;width:83px;height:19px;box-shadow:inset 1px 1px #808080, inset -1px -1px #fff, inset 2px 2px #404040, inset -2px -2px #d4d0c8;background:#fff"></div>
<div class="a" style="left:364px;top:588px;width:59px;height:19px;box-shadow:inset 1px 1px #808080, inset -1px -1px #fff, inset 2px 2px #404040, inset -2px -2px #d4d0c8;background:#fff"></div>
<div class="a" style="left:469px;top:567px;width:83px;height:19px;box-shadow:inset 1px 1px #808080, inset -1px -1px #fff, inset 2px 2px #404040, inset -2px -2px #d4d0c8;background:#fff"></div>
<div class="a" style="left:493px;top:588px;width:59px;height:19px;box-shadow:inset 1px 1px #808080, inset -1px -1px #fff, inset 2px 2px #404040, inset -2px -2px #d4d0c8;background:#fff"></div>
<div class="a" style="left:302px;top:610px;width:25px;height:20px;box-shadow:inset -1px -1px #404040, inset 1px 1px #fff, inset -2px -2px #808080;background:#d4d0c8"></div>
<div class="a" style="left:328px;top:610px;width:27px;height:20px;box-shadow:inset -1px -1px #404040, inset 1px 1px #fff, inset -2px -2px #808080;background:#d4d0c8"></div>
<div class="a" style="left:355px;top:610px;width:26px;height:20px;box-shadow:inset 1px 1px #404040, inset -1px -1px #fff, inset 2px 2px #808080;background-image:repeating-conic-gradient(#fff 0 25%, #d4d0c8 0 50%);background-size:2px 2px"></div>
<div class="a" style="left:432px;top:610px;width:24px;height:20px;box-shadow:inset -1px -1px #404040, inset 1px 1px #fff, inset -2px -2px #808080;background:#d4d0c8"></div>
<div class="a" style="left:457px;top:610px;width:23px;height:20px;box-shadow:inset -1px -1px #404040, inset 1px 1px #fff, inset -2px -2px #808080;background:#d4d0c8"></div>
<div class="a" style="left:480px;top:610px;width:27px;height:20px;box-shadow:inset 1px 1px #404040, inset -1px -1px #fff, inset 2px 2px #808080;background-image:repeating-conic-gradient(#fff 0 25%, #d4d0c8 0 50%);background-size:2px 2px"></div>
<div class="a" style="left:508px;top:610px;width:21px;height:20px;box-shadow:inset -1px -1px #404040, inset 1px 1px #fff, inset -2px -2px #808080;background:#d4d0c8"></div>
<div class="a" style="left:516px;top:621px;width:3px;height:1px;background:#000"></div>
<svg class="a" style="left:406px;top:611px" width="14" height="14"><circle cx="7" cy="7" r="5.5" fill="none" stroke="#808080"/><circle cx="7" cy="7" r="2" fill="#808080"/></svg>
<svg class="a" style="left:541px;top:611px" width="14" height="14"><circle cx="7" cy="7" r="5.5" fill="none" stroke="#808080"/><circle cx="7" cy="7" r="2" fill="#808080"/></svg>
<div class="a" style="left:619px;top:569px;width:18px;height:18px;box-shadow:inset 1px 1px #404040, inset -1px -1px #fff, inset 2px 2px #808080;background-image:repeating-conic-gradient(#fff 0 25%, #d4d0c8 0 50%);background-size:2px 2px"><svg width="18" height="18"><path d="M4.5,13.5 H8.5 V4.5 H13 M6.5,10 L8.5,6 L10.5,10" stroke="#000" fill="none"/></svg></div>
<div class="a" style="left:637px;top:569px;width:18px;height:18px;box-shadow:inset -1px -1px #404040, inset 1px 1px #fff, inset -2px -2px #808080;background:#d4d0c8"><svg width="18" height="18"><path d="M4.5,4.5 H8.5 V13.5 H13 M6.5,8 L8.5,12 L10.5,8" stroke="#000" fill="none"/></svg></div>
<div class="a" style="left:658px;top:569px;width:19px;height:18px;box-shadow:inset 1px 1px #404040, inset -1px -1px #fff, inset 2px 2px #808080;background-image:repeating-conic-gradient(#fff 0 25%, #d4d0c8 0 50%);background-size:2px 2px"></div>
<div class="a" style="left:678px;top:569px;width:19px;height:18px;box-shadow:inset -1px -1px #404040, inset 1px 1px #fff, inset -2px -2px #808080;background:#d4d0c8"></div>
<div class="a" style="left:698px;top:569px;width:40px;height:18px;box-shadow:inset -1px -1px #404040, inset 1px 1px #fff, inset -2px -2px #808080;background:#d4d0c8"></div>
<div class="a" style="left:619px;top:591px;width:78px;height:18px;box-shadow:inset 1px 1px #808080, inset -1px -1px #fff, inset 2px 2px #404040, inset -2px -2px #d4d0c8;background:#fff"></div>
<div class="a" style="left:698px;top:591px;width:40px;height:18px;box-shadow:inset 1px 1px #808080, inset -1px -1px #fff, inset 2px 2px #404040, inset -2px -2px #d4d0c8;background:#fff"></div>
<div class="a" style="left:563px;top:610px;width:42px;height:20px;box-shadow:inset -1px -1px #404040, inset 1px 1px #fff, inset -2px -2px #808080;background:#d4d0c8"></div>
<div class="a" style="left:605px;top:610px;width:47px;height:20px;box-shadow:inset -1px -1px #404040, inset 1px 1px #fff, inset -2px -2px #808080;background:#d4d0c8"></div>
<div class="a" style="left:653px;top:610px;width:38px;height:20px;box-shadow:inset -1px -1px #404040, inset 1px 1px #fff, inset -2px -2px #808080;background:#d4d0c8"></div>
<div class="a" style="left:692px;top:610px;width:45px;height:20px;box-shadow:inset 1px 1px #404040, inset -1px -1px #fff, inset 2px 2px #808080;background-image:repeating-conic-gradient(#fff 0 25%, #d4d0c8 0 50%);background-size:2px 2px"></div>
<svg class="a" style="left:0;top:0" width="730" height="623" viewBox="0 0 730 623">
<text x="164.4" y="213" font-family="Liberation Sans" font-size="11" font-weight="bold" fill="#fff" textLength="109.99999999999997" lengthAdjust="spacingAndGlyphs" >Осциллограф-XSC1</text>
<text x="168.4" y="506" font-family="Liberation Sans" font-size="11" font-weight="normal" fill="#000" textLength="11.0" lengthAdjust="spacingAndGlyphs" >T1</text>
<text x="168.4" y="520" font-family="Liberation Sans" font-size="11" font-weight="normal" fill="#000" textLength="11.0" lengthAdjust="spacingAndGlyphs" >T2</text>
<text x="168.4" y="540" font-family="Liberation Sans" font-size="11" font-weight="normal" fill="#000" textLength="27.19999999999999" lengthAdjust="spacingAndGlyphs" >T2-T1</text>
<text x="239.2" y="500" font-family="Liberation Sans" font-size="10.5" font-weight="normal" fill="#000" textLength="30.80000000000001" lengthAdjust="spacingAndGlyphs" >Время</text>
<text x="312.9" y="500" font-family="Liberation Sans" font-size="10.5" font-weight="normal" fill="#000" textLength="44.700000000000045" lengthAdjust="spacingAndGlyphs" >Канал_А</text>
<text x="393.1" y="500" font-family="Liberation Sans" font-size="10.5" font-weight="normal" fill="#000" textLength="43.89999999999998" lengthAdjust="spacingAndGlyphs" >Канал_В</text>
<text x="233.2" y="513" font-family="Liberation Sans" font-size="10.5" font-weight="normal" fill="#000" textLength="50.5" lengthAdjust="spacingAndGlyphs" >70.958 ms</text>
<text x="310.4" y="513" font-family="Liberation Sans" font-size="10.5" font-weight="normal" fill="#000" textLength="57.400000000000034" lengthAdjust="spacingAndGlyphs" >419.322 mV</text>
<text x="387.3" y="513" font-family="Liberation Sans" font-size="10.5" font-weight="normal" fill="#000" textLength="61.5" lengthAdjust="spacingAndGlyphs" >-341.284 mV</text>
<text x="233.2" y="526" font-family="Liberation Sans" font-size="10.5" font-weight="normal" fill="#000" textLength="50.5" lengthAdjust="spacingAndGlyphs" >71.485 ms</text>
<text x="310.4" y="526" font-family="Liberation Sans" font-size="10.5" font-weight="normal" fill="#000" textLength="57.400000000000034" lengthAdjust="spacingAndGlyphs" >611.912 mV</text>
<text x="390.1" y="526" font-family="Liberation Sans" font-size="10.5" font-weight="normal" fill="#000" textLength="58.69999999999999" lengthAdjust="spacingAndGlyphs" >908.674 mV</text>
<text x="229.9" y="539" font-family="Liberation Sans" font-size="10.5" font-weight="normal" fill="#000" textLength="54.900000000000006" lengthAdjust="spacingAndGlyphs" >526.316 us</text>
<text x="311.0" y="539" font-family="Liberation Sans" font-size="10.5" font-weight="normal" fill="#000" textLength="56.80000000000001" lengthAdjust="spacingAndGlyphs" >192.591 mV</text>
<text x="399.9" y="539" font-family="Liberation Sans" font-size="10.5" font-weight="normal" fill="#000" textLength="37.10000000000002" lengthAdjust="spacingAndGlyphs" >1.250 V</text>
<text x="601.4" y="508.5" font-family="Liberation Sans" font-size="11" font-weight="normal" fill="#000" textLength="31.600000000000023" lengthAdjust="spacingAndGlyphs" >Экран</text>
<text x="588.9" y="536.5" font-family="Liberation Sans" font-size="11" font-weight="normal" fill="#000" textLength="55.80000000000007" lengthAdjust="spacingAndGlyphs" >Сохранить</text>
<text x="655.7" y="546.5" font-family="Liberation Sans" font-size="11" font-weight="normal" fill="#000" textLength="44.19999999999993" lengthAdjust="spacingAndGlyphs" >Внешняя</text>
<text x="170.9" y="565" font-family="Liberation Sans" font-size="11" font-weight="normal" fill="#000" textLength="53.79999999999998" lengthAdjust="spacingAndGlyphs" >Развертка</text>
<text x="305.7" y="565" font-family="Liberation Sans" font-size="11" font-weight="normal" fill="#000" textLength="42.400000000000034" lengthAdjust="spacingAndGlyphs" >Канал А</text>
<text x="434.7" y="565" font-family="Liberation Sans" font-size="11" font-weight="normal" fill="#000" textLength="41.5" lengthAdjust="spacingAndGlyphs" >Канал В</text>
<text x="565.4" y="565" font-family="Liberation Sans" font-size="11" font-weight="normal" fill="#000" textLength="78.39999999999998" lengthAdjust="spacingAndGlyphs" >Синхронизация</text>
<text x="165.4" y="582" font-family="Liberation Sans" font-size="11" font-weight="normal" fill="#000" textLength="37.400000000000006" lengthAdjust="spacingAndGlyphs" >Шкала:</text>
<text x="214.1" y="581" font-family="Liberation Sans" font-size="11" font-weight="normal" fill="#000" textLength="41.400000000000006" lengthAdjust="spacingAndGlyphs" >1 ms/Div</text>
<text x="163.8" y="602" font-family="Liberation Sans" font-size="11" font-weight="normal" fill="#000" textLength="60.89999999999998" lengthAdjust="spacingAndGlyphs" >задержка X</text>
<text x="235.2" y="602" font-family="Liberation Sans" font-size="11" font-weight="normal" fill="#000" textLength="6.900000000000006" lengthAdjust="spacingAndGlyphs" >0</text>
<text x="173.8" y="624" font-family="Liberation Sans" font-size="11" font-weight="normal" fill="#000" textLength="16.5" lengthAdjust="spacingAndGlyphs" >Y/T</text>
<text x="201.2" y="624" font-family="Liberation Sans" font-size="11" font-weight="normal" fill="#000" textLength="18.900000000000006" lengthAdjust="spacingAndGlyphs" >Add</text>
<text x="231.9" y="624" font-family="Liberation Sans" font-size="11" font-weight="normal" fill="#000" textLength="18.5" lengthAdjust="spacingAndGlyphs" >B/A</text>
<text x="262.6" y="624" font-family="Liberation Sans" font-size="11" font-weight="normal" fill="#000" textLength="17.899999999999977" lengthAdjust="spacingAndGlyphs" >A/B</text>
<text x="300.4" y="582" font-family="Liberation Sans" font-size="11" font-weight="normal" fill="#000" textLength="34.200000000000045" lengthAdjust="spacingAndGlyphs" >Шкала</text>
<text x="345.0" y="581" font-family="Liberation Sans" font-size="11" font-weight="normal" fill="#000" textLength="54.89999999999998" lengthAdjust="spacingAndGlyphs" >500 mV/Div</text>
<text x="299.9" y="602" font-family="Liberation Sans" font-size="11" font-weight="normal" fill="#000" textLength="58.700000000000045" lengthAdjust="spacingAndGlyphs" >смещение Y</text>
<text x="369.0" y="602" font-family="Liberation Sans" font-size="11" font-weight="normal" fill="#000" textLength="10.800000000000011" lengthAdjust="spacingAndGlyphs" >-0</text>
<text x="429.4" y="582" font-family="Liberation Sans" font-size="11" font-weight="normal" fill="#000" textLength="34.200000000000045" lengthAdjust="spacingAndGlyphs" >Шкала</text>
<text x="474.0" y="581" font-family="Liberation Sans" font-size="11" font-weight="normal" fill="#000" textLength="54.89999999999998" lengthAdjust="spacingAndGlyphs" >500 mV/Div</text>
<text x="428.9" y="602" font-family="Liberation Sans" font-size="11" font-weight="normal" fill="#000" textLength="58.700000000000045" lengthAdjust="spacingAndGlyphs" >смещение Y</text>
<text x="498.0" y="602" font-family="Liberation Sans" font-size="11" font-weight="normal" fill="#000" textLength="17.899999999999977" lengthAdjust="spacingAndGlyphs" >0.2</text>
<text x="306.3" y="625" font-family="Liberation Sans" font-size="11" font-weight="normal" fill="#000" textLength="15.0" lengthAdjust="spacingAndGlyphs" >AC</text>
<text x="337.0" y="625" font-family="Liberation Sans" font-size="11" font-weight="normal" fill="#000" textLength="6.300000000000011" lengthAdjust="spacingAndGlyphs" >0</text>
<text x="359.4" y="625" font-family="Liberation Sans" font-size="11" font-weight="normal" fill="#000" textLength="15.600000000000023" lengthAdjust="spacingAndGlyphs" >DC</text>
<text x="436.3" y="625" font-family="Liberation Sans" font-size="11" font-weight="normal" fill="#000" textLength="15.0" lengthAdjust="spacingAndGlyphs" >AC</text>
<text x="465.4" y="625" font-family="Liberation Sans" font-size="11" font-weight="normal" fill="#000" textLength="6.600000000000023" lengthAdjust="spacingAndGlyphs" >0</text>
<text x="485.6" y="625" font-family="Liberation Sans" font-size="11" font-weight="normal" fill="#000" textLength="15.599999999999966" lengthAdjust="spacingAndGlyphs" >DC</text>
<text x="561.2" y="582" font-family="Liberation Sans" font-size="11" font-weight="normal" fill="#000" textLength="35.0" lengthAdjust="spacingAndGlyphs" >Запуск</text>
<text x="663.3" y="582" font-family="Liberation Sans" font-size="11" font-weight="normal" fill="#808080" textLength="8.100000000000023" lengthAdjust="spacingAndGlyphs" style="text-shadow:1px 1px #fff">A</text>
<text x="682.4" y="582" font-family="Liberation Sans" font-size="11" font-weight="normal" fill="#808080" textLength="8.200000000000045" lengthAdjust="spacingAndGlyphs" style="text-shadow:1px 1px #fff">B</text>
<text x="699.8" y="582" font-family="Liberation Sans" font-size="11" font-weight="normal" fill="#808080" textLength="28.300000000000068" lengthAdjust="spacingAndGlyphs" style="text-shadow:1px 1px #fff">Внеш</text>
<text x="561.2" y="602.5" font-family="Liberation Sans" font-size="11" font-weight="normal" fill="#000" textLength="43.09999999999991" lengthAdjust="spacingAndGlyphs" >Уровень</text>
<text x="622.9" y="604" font-family="Liberation Sans" font-size="11" font-weight="normal" fill="#000" textLength="7.2000000000000455" lengthAdjust="spacingAndGlyphs" >0</text>
<text x="705.2" y="604" font-family="Liberation Sans" font-size="11" font-weight="normal" fill="#000" textLength="8.399999999999977" lengthAdjust="spacingAndGlyphs" >V</text>
<text x="570.4" y="624" font-family="Liberation Sans" font-size="11" font-weight="normal" fill="#000" textLength="25.800000000000068" lengthAdjust="spacingAndGlyphs" >Одн.</text>
<text x="614.0" y="624" font-family="Liberation Sans" font-size="11" font-weight="normal" fill="#000" textLength="27.799999999999955" lengthAdjust="spacingAndGlyphs" >Норм</text>
<text x="657.9" y="624" font-family="Liberation Sans" font-size="11" font-weight="normal" fill="#000" textLength="27.800000000000068" lengthAdjust="spacingAndGlyphs" >Авто</text>
<text x="700.3" y="624" font-family="Liberation Sans" font-size="11" font-weight="normal" fill="#000" textLength="20.40000000000009" lengthAdjust="spacingAndGlyphs" >Нет</text>
</svg></body></html>
